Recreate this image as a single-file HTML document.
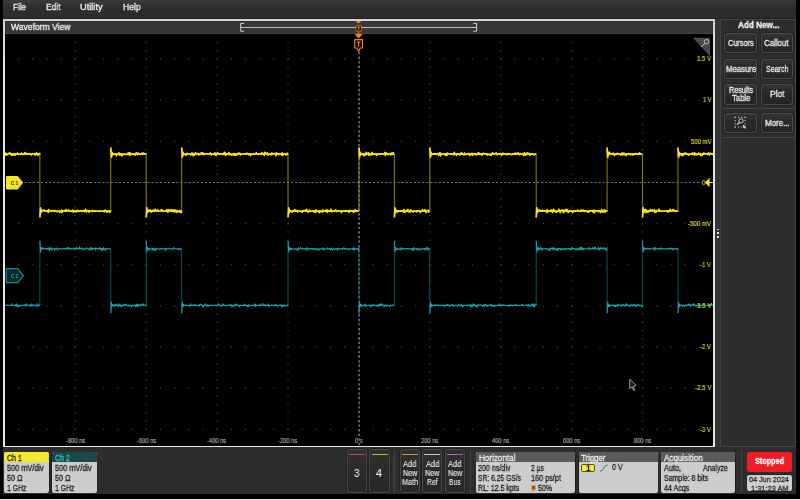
<!DOCTYPE html>
<html><head><meta charset="utf-8"><title>scope</title>
<style>
html,body{margin:0;padding:0;background:#000;}
body{width:800px;height:500px;position:relative;overflow:hidden;font-family:"Liberation Sans",sans-serif;}
.b{position:absolute;display:block;}
.t{will-change:transform;position:absolute;display:block;white-space:nowrap;transform-origin:0 50%;}
</style></head><body>
<div class="b" style="left:3.00px;top:0.00px;width:793.00px;height:494.00px;background:#2b2b2b;"></div>
<div class="b" style="left:3.00px;top:0.00px;width:793.00px;height:19.00px;background:linear-gradient(#3a3a3a,#2e2e2e 40%,#2b2b2b);"></div>
<span class="t" style="left:12.60px;top:1.99px;font-size:8.6px;line-height:10.32px;color:#f0f0f0;transform:scaleX(0.938);-webkit-text-stroke:0.28px #f0f0f0;">File</span>
<span class="t" style="left:45.60px;top:1.99px;font-size:8.6px;line-height:10.32px;color:#f0f0f0;transform:scaleX(0.972);-webkit-text-stroke:0.28px #f0f0f0;">Edit</span>
<span class="t" style="left:80.00px;top:1.99px;font-size:8.6px;line-height:10.32px;color:#f0f0f0;transform:scaleX(1.075);-webkit-text-stroke:0.28px #f0f0f0;">Utility</span>
<span class="t" style="left:122.50px;top:1.99px;font-size:8.6px;line-height:10.32px;color:#f0f0f0;transform:scaleX(0.989);-webkit-text-stroke:0.28px #f0f0f0;">Help</span>
<div class="b" style="left:3.00px;top:18.00px;width:793.00px;height:1.20px;background:#222;"></div>
<div class="b" style="left:3.00px;top:19.20px;width:711.80px;height:428.10px;background:linear-gradient(#d2d2d2,#e6e6e6 12%);"></div>
<div class="b" style="left:5.00px;top:20.80px;width:708.20px;height:13.60px;background:#363636;"></div>
<div class="b" style="left:5.00px;top:33.20px;width:708.20px;height:1.20px;background:#444;"></div>
<span class="t" style="left:10.60px;top:22.19px;font-size:8.6px;line-height:10.32px;color:#f2f2f2;transform:scaleX(0.994);-webkit-text-stroke:0.28px #f2f2f2;">Waveform View</span>
<div class="b" style="left:5.00px;top:34.40px;width:708.20px;height:411.50px;background:#000;"></div>
<div class="b" style="left:714.80px;top:19.20px;width:5.70px;height:428.10px;background:#353535;"></div>
<svg class="b" style="left:0;top:0" width="800" height="500" viewBox="0 0 800 500"><g fill="#464646"><rect x="18.03" y="58.45" width="1.15" height="1.15"/><rect x="32.21" y="58.45" width="1.15" height="1.15"/><rect x="46.39" y="58.45" width="1.15" height="1.15"/><rect x="60.57" y="58.45" width="1.15" height="1.15"/><rect x="74.75" y="58.45" width="1.15" height="1.15"/><rect x="88.93" y="58.45" width="1.15" height="1.15"/><rect x="103.11" y="58.45" width="1.15" height="1.15"/><rect x="117.29" y="58.45" width="1.15" height="1.15"/><rect x="131.47" y="58.45" width="1.15" height="1.15"/><rect x="145.65" y="58.45" width="1.15" height="1.15"/><rect x="159.83" y="58.45" width="1.15" height="1.15"/><rect x="174.01" y="58.45" width="1.15" height="1.15"/><rect x="188.19" y="58.45" width="1.15" height="1.15"/><rect x="202.37" y="58.45" width="1.15" height="1.15"/><rect x="216.55" y="58.45" width="1.15" height="1.15"/><rect x="230.73" y="58.45" width="1.15" height="1.15"/><rect x="244.91" y="58.45" width="1.15" height="1.15"/><rect x="259.09" y="58.45" width="1.15" height="1.15"/><rect x="273.27" y="58.45" width="1.15" height="1.15"/><rect x="287.45" y="58.45" width="1.15" height="1.15"/><rect x="301.63" y="58.45" width="1.15" height="1.15"/><rect x="315.81" y="58.45" width="1.15" height="1.15"/><rect x="329.99" y="58.45" width="1.15" height="1.15"/><rect x="344.17" y="58.45" width="1.15" height="1.15"/><rect x="358.35" y="58.45" width="1.15" height="1.15"/><rect x="372.53" y="58.45" width="1.15" height="1.15"/><rect x="386.71" y="58.45" width="1.15" height="1.15"/><rect x="400.89" y="58.45" width="1.15" height="1.15"/><rect x="415.07" y="58.45" width="1.15" height="1.15"/><rect x="429.25" y="58.45" width="1.15" height="1.15"/><rect x="443.43" y="58.45" width="1.15" height="1.15"/><rect x="457.61" y="58.45" width="1.15" height="1.15"/><rect x="471.79" y="58.45" width="1.15" height="1.15"/><rect x="485.97" y="58.45" width="1.15" height="1.15"/><rect x="500.15" y="58.45" width="1.15" height="1.15"/><rect x="514.33" y="58.45" width="1.15" height="1.15"/><rect x="528.51" y="58.45" width="1.15" height="1.15"/><rect x="542.69" y="58.45" width="1.15" height="1.15"/><rect x="556.87" y="58.45" width="1.15" height="1.15"/><rect x="571.05" y="58.45" width="1.15" height="1.15"/><rect x="585.23" y="58.45" width="1.15" height="1.15"/><rect x="599.41" y="58.45" width="1.15" height="1.15"/><rect x="613.59" y="58.45" width="1.15" height="1.15"/><rect x="627.77" y="58.45" width="1.15" height="1.15"/><rect x="641.95" y="58.45" width="1.15" height="1.15"/><rect x="656.13" y="58.45" width="1.15" height="1.15"/><rect x="670.31" y="58.45" width="1.15" height="1.15"/><rect x="684.49" y="58.45" width="1.15" height="1.15"/><rect x="698.67" y="58.45" width="1.15" height="1.15"/><rect x="18.03" y="99.60" width="1.15" height="1.15"/><rect x="32.21" y="99.60" width="1.15" height="1.15"/><rect x="46.39" y="99.60" width="1.15" height="1.15"/><rect x="60.57" y="99.60" width="1.15" height="1.15"/><rect x="74.75" y="99.60" width="1.15" height="1.15"/><rect x="88.93" y="99.60" width="1.15" height="1.15"/><rect x="103.11" y="99.60" width="1.15" height="1.15"/><rect x="117.29" y="99.60" width="1.15" height="1.15"/><rect x="131.47" y="99.60" width="1.15" height="1.15"/><rect x="145.65" y="99.60" width="1.15" height="1.15"/><rect x="159.83" y="99.60" width="1.15" height="1.15"/><rect x="174.01" y="99.60" width="1.15" height="1.15"/><rect x="188.19" y="99.60" width="1.15" height="1.15"/><rect x="202.37" y="99.60" width="1.15" height="1.15"/><rect x="216.55" y="99.60" width="1.15" height="1.15"/><rect x="230.73" y="99.60" width="1.15" height="1.15"/><rect x="244.91" y="99.60" width="1.15" height="1.15"/><rect x="259.09" y="99.60" width="1.15" height="1.15"/><rect x="273.27" y="99.60" width="1.15" height="1.15"/><rect x="287.45" y="99.60" width="1.15" height="1.15"/><rect x="301.63" y="99.60" width="1.15" height="1.15"/><rect x="315.81" y="99.60" width="1.15" height="1.15"/><rect x="329.99" y="99.60" width="1.15" height="1.15"/><rect x="344.17" y="99.60" width="1.15" height="1.15"/><rect x="358.35" y="99.60" width="1.15" height="1.15"/><rect x="372.53" y="99.60" width="1.15" height="1.15"/><rect x="386.71" y="99.60" width="1.15" height="1.15"/><rect x="400.89" y="99.60" width="1.15" height="1.15"/><rect x="415.07" y="99.60" width="1.15" height="1.15"/><rect x="429.25" y="99.60" width="1.15" height="1.15"/><rect x="443.43" y="99.60" width="1.15" height="1.15"/><rect x="457.61" y="99.60" width="1.15" height="1.15"/><rect x="471.79" y="99.60" width="1.15" height="1.15"/><rect x="485.97" y="99.60" width="1.15" height="1.15"/><rect x="500.15" y="99.60" width="1.15" height="1.15"/><rect x="514.33" y="99.60" width="1.15" height="1.15"/><rect x="528.51" y="99.60" width="1.15" height="1.15"/><rect x="542.69" y="99.60" width="1.15" height="1.15"/><rect x="556.87" y="99.60" width="1.15" height="1.15"/><rect x="571.05" y="99.60" width="1.15" height="1.15"/><rect x="585.23" y="99.60" width="1.15" height="1.15"/><rect x="599.41" y="99.60" width="1.15" height="1.15"/><rect x="613.59" y="99.60" width="1.15" height="1.15"/><rect x="627.77" y="99.60" width="1.15" height="1.15"/><rect x="641.95" y="99.60" width="1.15" height="1.15"/><rect x="656.13" y="99.60" width="1.15" height="1.15"/><rect x="670.31" y="99.60" width="1.15" height="1.15"/><rect x="684.49" y="99.60" width="1.15" height="1.15"/><rect x="698.67" y="99.60" width="1.15" height="1.15"/><rect x="18.03" y="140.75" width="1.15" height="1.15"/><rect x="32.21" y="140.75" width="1.15" height="1.15"/><rect x="46.39" y="140.75" width="1.15" height="1.15"/><rect x="60.57" y="140.75" width="1.15" height="1.15"/><rect x="74.75" y="140.75" width="1.15" height="1.15"/><rect x="88.93" y="140.75" width="1.15" height="1.15"/><rect x="103.11" y="140.75" width="1.15" height="1.15"/><rect x="117.29" y="140.75" width="1.15" height="1.15"/><rect x="131.47" y="140.75" width="1.15" height="1.15"/><rect x="145.65" y="140.75" width="1.15" height="1.15"/><rect x="159.83" y="140.75" width="1.15" height="1.15"/><rect x="174.01" y="140.75" width="1.15" height="1.15"/><rect x="188.19" y="140.75" width="1.15" height="1.15"/><rect x="202.37" y="140.75" width="1.15" height="1.15"/><rect x="216.55" y="140.75" width="1.15" height="1.15"/><rect x="230.73" y="140.75" width="1.15" height="1.15"/><rect x="244.91" y="140.75" width="1.15" height="1.15"/><rect x="259.09" y="140.75" width="1.15" height="1.15"/><rect x="273.27" y="140.75" width="1.15" height="1.15"/><rect x="287.45" y="140.75" width="1.15" height="1.15"/><rect x="301.63" y="140.75" width="1.15" height="1.15"/><rect x="315.81" y="140.75" width="1.15" height="1.15"/><rect x="329.99" y="140.75" width="1.15" height="1.15"/><rect x="344.17" y="140.75" width="1.15" height="1.15"/><rect x="358.35" y="140.75" width="1.15" height="1.15"/><rect x="372.53" y="140.75" width="1.15" height="1.15"/><rect x="386.71" y="140.75" width="1.15" height="1.15"/><rect x="400.89" y="140.75" width="1.15" height="1.15"/><rect x="415.07" y="140.75" width="1.15" height="1.15"/><rect x="429.25" y="140.75" width="1.15" height="1.15"/><rect x="443.43" y="140.75" width="1.15" height="1.15"/><rect x="457.61" y="140.75" width="1.15" height="1.15"/><rect x="471.79" y="140.75" width="1.15" height="1.15"/><rect x="485.97" y="140.75" width="1.15" height="1.15"/><rect x="500.15" y="140.75" width="1.15" height="1.15"/><rect x="514.33" y="140.75" width="1.15" height="1.15"/><rect x="528.51" y="140.75" width="1.15" height="1.15"/><rect x="542.69" y="140.75" width="1.15" height="1.15"/><rect x="556.87" y="140.75" width="1.15" height="1.15"/><rect x="571.05" y="140.75" width="1.15" height="1.15"/><rect x="585.23" y="140.75" width="1.15" height="1.15"/><rect x="599.41" y="140.75" width="1.15" height="1.15"/><rect x="613.59" y="140.75" width="1.15" height="1.15"/><rect x="627.77" y="140.75" width="1.15" height="1.15"/><rect x="641.95" y="140.75" width="1.15" height="1.15"/><rect x="656.13" y="140.75" width="1.15" height="1.15"/><rect x="670.31" y="140.75" width="1.15" height="1.15"/><rect x="684.49" y="140.75" width="1.15" height="1.15"/><rect x="698.67" y="140.75" width="1.15" height="1.15"/><rect x="18.03" y="181.90" width="1.15" height="1.15"/><rect x="32.21" y="181.90" width="1.15" height="1.15"/><rect x="46.39" y="181.90" width="1.15" height="1.15"/><rect x="60.57" y="181.90" width="1.15" height="1.15"/><rect x="74.75" y="181.90" width="1.15" height="1.15"/><rect x="88.93" y="181.90" width="1.15" height="1.15"/><rect x="103.11" y="181.90" width="1.15" height="1.15"/><rect x="117.29" y="181.90" width="1.15" height="1.15"/><rect x="131.47" y="181.90" width="1.15" height="1.15"/><rect x="145.65" y="181.90" width="1.15" height="1.15"/><rect x="159.83" y="181.90" width="1.15" height="1.15"/><rect x="174.01" y="181.90" width="1.15" height="1.15"/><rect x="188.19" y="181.90" width="1.15" height="1.15"/><rect x="202.37" y="181.90" width="1.15" height="1.15"/><rect x="216.55" y="181.90" width="1.15" height="1.15"/><rect x="230.73" y="181.90" width="1.15" height="1.15"/><rect x="244.91" y="181.90" width="1.15" height="1.15"/><rect x="259.09" y="181.90" width="1.15" height="1.15"/><rect x="273.27" y="181.90" width="1.15" height="1.15"/><rect x="287.45" y="181.90" width="1.15" height="1.15"/><rect x="301.63" y="181.90" width="1.15" height="1.15"/><rect x="315.81" y="181.90" width="1.15" height="1.15"/><rect x="329.99" y="181.90" width="1.15" height="1.15"/><rect x="344.17" y="181.90" width="1.15" height="1.15"/><rect x="358.35" y="181.90" width="1.15" height="1.15"/><rect x="372.53" y="181.90" width="1.15" height="1.15"/><rect x="386.71" y="181.90" width="1.15" height="1.15"/><rect x="400.89" y="181.90" width="1.15" height="1.15"/><rect x="415.07" y="181.90" width="1.15" height="1.15"/><rect x="429.25" y="181.90" width="1.15" height="1.15"/><rect x="443.43" y="181.90" width="1.15" height="1.15"/><rect x="457.61" y="181.90" width="1.15" height="1.15"/><rect x="471.79" y="181.90" width="1.15" height="1.15"/><rect x="485.97" y="181.90" width="1.15" height="1.15"/><rect x="500.15" y="181.90" width="1.15" height="1.15"/><rect x="514.33" y="181.90" width="1.15" height="1.15"/><rect x="528.51" y="181.90" width="1.15" height="1.15"/><rect x="542.69" y="181.90" width="1.15" height="1.15"/><rect x="556.87" y="181.90" width="1.15" height="1.15"/><rect x="571.05" y="181.90" width="1.15" height="1.15"/><rect x="585.23" y="181.90" width="1.15" height="1.15"/><rect x="599.41" y="181.90" width="1.15" height="1.15"/><rect x="613.59" y="181.90" width="1.15" height="1.15"/><rect x="627.77" y="181.90" width="1.15" height="1.15"/><rect x="641.95" y="181.90" width="1.15" height="1.15"/><rect x="656.13" y="181.90" width="1.15" height="1.15"/><rect x="670.31" y="181.90" width="1.15" height="1.15"/><rect x="684.49" y="181.90" width="1.15" height="1.15"/><rect x="698.67" y="181.90" width="1.15" height="1.15"/><rect x="18.03" y="223.05" width="1.15" height="1.15"/><rect x="32.21" y="223.05" width="1.15" height="1.15"/><rect x="46.39" y="223.05" width="1.15" height="1.15"/><rect x="60.57" y="223.05" width="1.15" height="1.15"/><rect x="74.75" y="223.05" width="1.15" height="1.15"/><rect x="88.93" y="223.05" width="1.15" height="1.15"/><rect x="103.11" y="223.05" width="1.15" height="1.15"/><rect x="117.29" y="223.05" width="1.15" height="1.15"/><rect x="131.47" y="223.05" width="1.15" height="1.15"/><rect x="145.65" y="223.05" width="1.15" height="1.15"/><rect x="159.83" y="223.05" width="1.15" height="1.15"/><rect x="174.01" y="223.05" width="1.15" height="1.15"/><rect x="188.19" y="223.05" width="1.15" height="1.15"/><rect x="202.37" y="223.05" width="1.15" height="1.15"/><rect x="216.55" y="223.05" width="1.15" height="1.15"/><rect x="230.73" y="223.05" width="1.15" height="1.15"/><rect x="244.91" y="223.05" width="1.15" height="1.15"/><rect x="259.09" y="223.05" width="1.15" height="1.15"/><rect x="273.27" y="223.05" width="1.15" height="1.15"/><rect x="287.45" y="223.05" width="1.15" height="1.15"/><rect x="301.63" y="223.05" width="1.15" height="1.15"/><rect x="315.81" y="223.05" width="1.15" height="1.15"/><rect x="329.99" y="223.05" width="1.15" height="1.15"/><rect x="344.17" y="223.05" width="1.15" height="1.15"/><rect x="358.35" y="223.05" width="1.15" height="1.15"/><rect x="372.53" y="223.05" width="1.15" height="1.15"/><rect x="386.71" y="223.05" width="1.15" height="1.15"/><rect x="400.89" y="223.05" width="1.15" height="1.15"/><rect x="415.07" y="223.05" width="1.15" height="1.15"/><rect x="429.25" y="223.05" width="1.15" height="1.15"/><rect x="443.43" y="223.05" width="1.15" height="1.15"/><rect x="457.61" y="223.05" width="1.15" height="1.15"/><rect x="471.79" y="223.05" width="1.15" height="1.15"/><rect x="485.97" y="223.05" width="1.15" height="1.15"/><rect x="500.15" y="223.05" width="1.15" height="1.15"/><rect x="514.33" y="223.05" width="1.15" height="1.15"/><rect x="528.51" y="223.05" width="1.15" height="1.15"/><rect x="542.69" y="223.05" width="1.15" height="1.15"/><rect x="556.87" y="223.05" width="1.15" height="1.15"/><rect x="571.05" y="223.05" width="1.15" height="1.15"/><rect x="585.23" y="223.05" width="1.15" height="1.15"/><rect x="599.41" y="223.05" width="1.15" height="1.15"/><rect x="613.59" y="223.05" width="1.15" height="1.15"/><rect x="627.77" y="223.05" width="1.15" height="1.15"/><rect x="641.95" y="223.05" width="1.15" height="1.15"/><rect x="656.13" y="223.05" width="1.15" height="1.15"/><rect x="670.31" y="223.05" width="1.15" height="1.15"/><rect x="684.49" y="223.05" width="1.15" height="1.15"/><rect x="698.67" y="223.05" width="1.15" height="1.15"/><rect x="18.03" y="264.20" width="1.15" height="1.15"/><rect x="32.21" y="264.20" width="1.15" height="1.15"/><rect x="46.39" y="264.20" width="1.15" height="1.15"/><rect x="60.57" y="264.20" width="1.15" height="1.15"/><rect x="74.75" y="264.20" width="1.15" height="1.15"/><rect x="88.93" y="264.20" width="1.15" height="1.15"/><rect x="103.11" y="264.20" width="1.15" height="1.15"/><rect x="117.29" y="264.20" width="1.15" height="1.15"/><rect x="131.47" y="264.20" width="1.15" height="1.15"/><rect x="145.65" y="264.20" width="1.15" height="1.15"/><rect x="159.83" y="264.20" width="1.15" height="1.15"/><rect x="174.01" y="264.20" width="1.15" height="1.15"/><rect x="188.19" y="264.20" width="1.15" height="1.15"/><rect x="202.37" y="264.20" width="1.15" height="1.15"/><rect x="216.55" y="264.20" width="1.15" height="1.15"/><rect x="230.73" y="264.20" width="1.15" height="1.15"/><rect x="244.91" y="264.20" width="1.15" height="1.15"/><rect x="259.09" y="264.20" width="1.15" height="1.15"/><rect x="273.27" y="264.20" width="1.15" height="1.15"/><rect x="287.45" y="264.20" width="1.15" height="1.15"/><rect x="301.63" y="264.20" width="1.15" height="1.15"/><rect x="315.81" y="264.20" width="1.15" height="1.15"/><rect x="329.99" y="264.20" width="1.15" height="1.15"/><rect x="344.17" y="264.20" width="1.15" height="1.15"/><rect x="358.35" y="264.20" width="1.15" height="1.15"/><rect x="372.53" y="264.20" width="1.15" height="1.15"/><rect x="386.71" y="264.20" width="1.15" height="1.15"/><rect x="400.89" y="264.20" width="1.15" height="1.15"/><rect x="415.07" y="264.20" width="1.15" height="1.15"/><rect x="429.25" y="264.20" width="1.15" height="1.15"/><rect x="443.43" y="264.20" width="1.15" height="1.15"/><rect x="457.61" y="264.20" width="1.15" height="1.15"/><rect x="471.79" y="264.20" width="1.15" height="1.15"/><rect x="485.97" y="264.20" width="1.15" height="1.15"/><rect x="500.15" y="264.20" width="1.15" height="1.15"/><rect x="514.33" y="264.20" width="1.15" height="1.15"/><rect x="528.51" y="264.20" width="1.15" height="1.15"/><rect x="542.69" y="264.20" width="1.15" height="1.15"/><rect x="556.87" y="264.20" width="1.15" height="1.15"/><rect x="571.05" y="264.20" width="1.15" height="1.15"/><rect x="585.23" y="264.20" width="1.15" height="1.15"/><rect x="599.41" y="264.20" width="1.15" height="1.15"/><rect x="613.59" y="264.20" width="1.15" height="1.15"/><rect x="627.77" y="264.20" width="1.15" height="1.15"/><rect x="641.95" y="264.20" width="1.15" height="1.15"/><rect x="656.13" y="264.20" width="1.15" height="1.15"/><rect x="670.31" y="264.20" width="1.15" height="1.15"/><rect x="684.49" y="264.20" width="1.15" height="1.15"/><rect x="698.67" y="264.20" width="1.15" height="1.15"/><rect x="18.03" y="305.35" width="1.15" height="1.15"/><rect x="32.21" y="305.35" width="1.15" height="1.15"/><rect x="46.39" y="305.35" width="1.15" height="1.15"/><rect x="60.57" y="305.35" width="1.15" height="1.15"/><rect x="74.75" y="305.35" width="1.15" height="1.15"/><rect x="88.93" y="305.35" width="1.15" height="1.15"/><rect x="103.11" y="305.35" width="1.15" height="1.15"/><rect x="117.29" y="305.35" width="1.15" height="1.15"/><rect x="131.47" y="305.35" width="1.15" height="1.15"/><rect x="145.65" y="305.35" width="1.15" height="1.15"/><rect x="159.83" y="305.35" width="1.15" height="1.15"/><rect x="174.01" y="305.35" width="1.15" height="1.15"/><rect x="188.19" y="305.35" width="1.15" height="1.15"/><rect x="202.37" y="305.35" width="1.15" height="1.15"/><rect x="216.55" y="305.35" width="1.15" height="1.15"/><rect x="230.73" y="305.35" width="1.15" height="1.15"/><rect x="244.91" y="305.35" width="1.15" height="1.15"/><rect x="259.09" y="305.35" width="1.15" height="1.15"/><rect x="273.27" y="305.35" width="1.15" height="1.15"/><rect x="287.45" y="305.35" width="1.15" height="1.15"/><rect x="301.63" y="305.35" width="1.15" height="1.15"/><rect x="315.81" y="305.35" width="1.15" height="1.15"/><rect x="329.99" y="305.35" width="1.15" height="1.15"/><rect x="344.17" y="305.35" width="1.15" height="1.15"/><rect x="358.35" y="305.35" width="1.15" height="1.15"/><rect x="372.53" y="305.35" width="1.15" height="1.15"/><rect x="386.71" y="305.35" width="1.15" height="1.15"/><rect x="400.89" y="305.35" width="1.15" height="1.15"/><rect x="415.07" y="305.35" width="1.15" height="1.15"/><rect x="429.25" y="305.35" width="1.15" height="1.15"/><rect x="443.43" y="305.35" width="1.15" height="1.15"/><rect x="457.61" y="305.35" width="1.15" height="1.15"/><rect x="471.79" y="305.35" width="1.15" height="1.15"/><rect x="485.97" y="305.35" width="1.15" height="1.15"/><rect x="500.15" y="305.35" width="1.15" height="1.15"/><rect x="514.33" y="305.35" width="1.15" height="1.15"/><rect x="528.51" y="305.35" width="1.15" height="1.15"/><rect x="542.69" y="305.35" width="1.15" height="1.15"/><rect x="556.87" y="305.35" width="1.15" height="1.15"/><rect x="571.05" y="305.35" width="1.15" height="1.15"/><rect x="585.23" y="305.35" width="1.15" height="1.15"/><rect x="599.41" y="305.35" width="1.15" height="1.15"/><rect x="613.59" y="305.35" width="1.15" height="1.15"/><rect x="627.77" y="305.35" width="1.15" height="1.15"/><rect x="641.95" y="305.35" width="1.15" height="1.15"/><rect x="656.13" y="305.35" width="1.15" height="1.15"/><rect x="670.31" y="305.35" width="1.15" height="1.15"/><rect x="684.49" y="305.35" width="1.15" height="1.15"/><rect x="698.67" y="305.35" width="1.15" height="1.15"/><rect x="18.03" y="346.50" width="1.15" height="1.15"/><rect x="32.21" y="346.50" width="1.15" height="1.15"/><rect x="46.39" y="346.50" width="1.15" height="1.15"/><rect x="60.57" y="346.50" width="1.15" height="1.15"/><rect x="74.75" y="346.50" width="1.15" height="1.15"/><rect x="88.93" y="346.50" width="1.15" height="1.15"/><rect x="103.11" y="346.50" width="1.15" height="1.15"/><rect x="117.29" y="346.50" width="1.15" height="1.15"/><rect x="131.47" y="346.50" width="1.15" height="1.15"/><rect x="145.65" y="346.50" width="1.15" height="1.15"/><rect x="159.83" y="346.50" width="1.15" height="1.15"/><rect x="174.01" y="346.50" width="1.15" height="1.15"/><rect x="188.19" y="346.50" width="1.15" height="1.15"/><rect x="202.37" y="346.50" width="1.15" height="1.15"/><rect x="216.55" y="346.50" width="1.15" height="1.15"/><rect x="230.73" y="346.50" width="1.15" height="1.15"/><rect x="244.91" y="346.50" width="1.15" height="1.15"/><rect x="259.09" y="346.50" width="1.15" height="1.15"/><rect x="273.27" y="346.50" width="1.15" height="1.15"/><rect x="287.45" y="346.50" width="1.15" height="1.15"/><rect x="301.63" y="346.50" width="1.15" height="1.15"/><rect x="315.81" y="346.50" width="1.15" height="1.15"/><rect x="329.99" y="346.50" width="1.15" height="1.15"/><rect x="344.17" y="346.50" width="1.15" height="1.15"/><rect x="358.35" y="346.50" width="1.15" height="1.15"/><rect x="372.53" y="346.50" width="1.15" height="1.15"/><rect x="386.71" y="346.50" width="1.15" height="1.15"/><rect x="400.89" y="346.50" width="1.15" height="1.15"/><rect x="415.07" y="346.50" width="1.15" height="1.15"/><rect x="429.25" y="346.50" width="1.15" height="1.15"/><rect x="443.43" y="346.50" width="1.15" height="1.15"/><rect x="457.61" y="346.50" width="1.15" height="1.15"/><rect x="471.79" y="346.50" width="1.15" height="1.15"/><rect x="485.97" y="346.50" width="1.15" height="1.15"/><rect x="500.15" y="346.50" width="1.15" height="1.15"/><rect x="514.33" y="346.50" width="1.15" height="1.15"/><rect x="528.51" y="346.50" width="1.15" height="1.15"/><rect x="542.69" y="346.50" width="1.15" height="1.15"/><rect x="556.87" y="346.50" width="1.15" height="1.15"/><rect x="571.05" y="346.50" width="1.15" height="1.15"/><rect x="585.23" y="346.50" width="1.15" height="1.15"/><rect x="599.41" y="346.50" width="1.15" height="1.15"/><rect x="613.59" y="346.50" width="1.15" height="1.15"/><rect x="627.77" y="346.50" width="1.15" height="1.15"/><rect x="641.95" y="346.50" width="1.15" height="1.15"/><rect x="656.13" y="346.50" width="1.15" height="1.15"/><rect x="670.31" y="346.50" width="1.15" height="1.15"/><rect x="684.49" y="346.50" width="1.15" height="1.15"/><rect x="698.67" y="346.50" width="1.15" height="1.15"/><rect x="18.03" y="387.65" width="1.15" height="1.15"/><rect x="32.21" y="387.65" width="1.15" height="1.15"/><rect x="46.39" y="387.65" width="1.15" height="1.15"/><rect x="60.57" y="387.65" width="1.15" height="1.15"/><rect x="74.75" y="387.65" width="1.15" height="1.15"/><rect x="88.93" y="387.65" width="1.15" height="1.15"/><rect x="103.11" y="387.65" width="1.15" height="1.15"/><rect x="117.29" y="387.65" width="1.15" height="1.15"/><rect x="131.47" y="387.65" width="1.15" height="1.15"/><rect x="145.65" y="387.65" width="1.15" height="1.15"/><rect x="159.83" y="387.65" width="1.15" height="1.15"/><rect x="174.01" y="387.65" width="1.15" height="1.15"/><rect x="188.19" y="387.65" width="1.15" height="1.15"/><rect x="202.37" y="387.65" width="1.15" height="1.15"/><rect x="216.55" y="387.65" width="1.15" height="1.15"/><rect x="230.73" y="387.65" width="1.15" height="1.15"/><rect x="244.91" y="387.65" width="1.15" height="1.15"/><rect x="259.09" y="387.65" width="1.15" height="1.15"/><rect x="273.27" y="387.65" width="1.15" height="1.15"/><rect x="287.45" y="387.65" width="1.15" height="1.15"/><rect x="301.63" y="387.65" width="1.15" height="1.15"/><rect x="315.81" y="387.65" width="1.15" height="1.15"/><rect x="329.99" y="387.65" width="1.15" height="1.15"/><rect x="344.17" y="387.65" width="1.15" height="1.15"/><rect x="358.35" y="387.65" width="1.15" height="1.15"/><rect x="372.53" y="387.65" width="1.15" height="1.15"/><rect x="386.71" y="387.65" width="1.15" height="1.15"/><rect x="400.89" y="387.65" width="1.15" height="1.15"/><rect x="415.07" y="387.65" width="1.15" height="1.15"/><rect x="429.25" y="387.65" width="1.15" height="1.15"/><rect x="443.43" y="387.65" width="1.15" height="1.15"/><rect x="457.61" y="387.65" width="1.15" height="1.15"/><rect x="471.79" y="387.65" width="1.15" height="1.15"/><rect x="485.97" y="387.65" width="1.15" height="1.15"/><rect x="500.15" y="387.65" width="1.15" height="1.15"/><rect x="514.33" y="387.65" width="1.15" height="1.15"/><rect x="528.51" y="387.65" width="1.15" height="1.15"/><rect x="542.69" y="387.65" width="1.15" height="1.15"/><rect x="556.87" y="387.65" width="1.15" height="1.15"/><rect x="571.05" y="387.65" width="1.15" height="1.15"/><rect x="585.23" y="387.65" width="1.15" height="1.15"/><rect x="599.41" y="387.65" width="1.15" height="1.15"/><rect x="613.59" y="387.65" width="1.15" height="1.15"/><rect x="627.77" y="387.65" width="1.15" height="1.15"/><rect x="641.95" y="387.65" width="1.15" height="1.15"/><rect x="656.13" y="387.65" width="1.15" height="1.15"/><rect x="670.31" y="387.65" width="1.15" height="1.15"/><rect x="684.49" y="387.65" width="1.15" height="1.15"/><rect x="698.67" y="387.65" width="1.15" height="1.15"/><rect x="18.03" y="428.80" width="1.15" height="1.15"/><rect x="32.21" y="428.80" width="1.15" height="1.15"/><rect x="46.39" y="428.80" width="1.15" height="1.15"/><rect x="60.57" y="428.80" width="1.15" height="1.15"/><rect x="74.75" y="428.80" width="1.15" height="1.15"/><rect x="88.93" y="428.80" width="1.15" height="1.15"/><rect x="103.11" y="428.80" width="1.15" height="1.15"/><rect x="117.29" y="428.80" width="1.15" height="1.15"/><rect x="131.47" y="428.80" width="1.15" height="1.15"/><rect x="145.65" y="428.80" width="1.15" height="1.15"/><rect x="159.83" y="428.80" width="1.15" height="1.15"/><rect x="174.01" y="428.80" width="1.15" height="1.15"/><rect x="188.19" y="428.80" width="1.15" height="1.15"/><rect x="202.37" y="428.80" width="1.15" height="1.15"/><rect x="216.55" y="428.80" width="1.15" height="1.15"/><rect x="230.73" y="428.80" width="1.15" height="1.15"/><rect x="244.91" y="428.80" width="1.15" height="1.15"/><rect x="259.09" y="428.80" width="1.15" height="1.15"/><rect x="273.27" y="428.80" width="1.15" height="1.15"/><rect x="287.45" y="428.80" width="1.15" height="1.15"/><rect x="301.63" y="428.80" width="1.15" height="1.15"/><rect x="315.81" y="428.80" width="1.15" height="1.15"/><rect x="329.99" y="428.80" width="1.15" height="1.15"/><rect x="344.17" y="428.80" width="1.15" height="1.15"/><rect x="358.35" y="428.80" width="1.15" height="1.15"/><rect x="372.53" y="428.80" width="1.15" height="1.15"/><rect x="386.71" y="428.80" width="1.15" height="1.15"/><rect x="400.89" y="428.80" width="1.15" height="1.15"/><rect x="415.07" y="428.80" width="1.15" height="1.15"/><rect x="429.25" y="428.80" width="1.15" height="1.15"/><rect x="443.43" y="428.80" width="1.15" height="1.15"/><rect x="457.61" y="428.80" width="1.15" height="1.15"/><rect x="471.79" y="428.80" width="1.15" height="1.15"/><rect x="485.97" y="428.80" width="1.15" height="1.15"/><rect x="500.15" y="428.80" width="1.15" height="1.15"/><rect x="514.33" y="428.80" width="1.15" height="1.15"/><rect x="528.51" y="428.80" width="1.15" height="1.15"/><rect x="542.69" y="428.80" width="1.15" height="1.15"/><rect x="556.87" y="428.80" width="1.15" height="1.15"/><rect x="571.05" y="428.80" width="1.15" height="1.15"/><rect x="585.23" y="428.80" width="1.15" height="1.15"/><rect x="599.41" y="428.80" width="1.15" height="1.15"/><rect x="613.59" y="428.80" width="1.15" height="1.15"/><rect x="627.77" y="428.80" width="1.15" height="1.15"/><rect x="641.95" y="428.80" width="1.15" height="1.15"/><rect x="656.13" y="428.80" width="1.15" height="1.15"/><rect x="670.31" y="428.80" width="1.15" height="1.15"/><rect x="684.49" y="428.80" width="1.15" height="1.15"/><rect x="698.67" y="428.80" width="1.15" height="1.15"/><rect x="74.75" y="41.99" width="1.15" height="1.15"/><rect x="74.75" y="50.22" width="1.15" height="1.15"/><rect x="74.75" y="58.45" width="1.15" height="1.15"/><rect x="74.75" y="66.68" width="1.15" height="1.15"/><rect x="74.75" y="74.91" width="1.15" height="1.15"/><rect x="74.75" y="83.14" width="1.15" height="1.15"/><rect x="74.75" y="91.37" width="1.15" height="1.15"/><rect x="74.75" y="99.60" width="1.15" height="1.15"/><rect x="74.75" y="107.83" width="1.15" height="1.15"/><rect x="74.75" y="116.06" width="1.15" height="1.15"/><rect x="74.75" y="124.29" width="1.15" height="1.15"/><rect x="74.75" y="132.52" width="1.15" height="1.15"/><rect x="74.75" y="140.75" width="1.15" height="1.15"/><rect x="74.75" y="148.98" width="1.15" height="1.15"/><rect x="74.75" y="157.21" width="1.15" height="1.15"/><rect x="74.75" y="165.44" width="1.15" height="1.15"/><rect x="74.75" y="173.67" width="1.15" height="1.15"/><rect x="74.75" y="181.90" width="1.15" height="1.15"/><rect x="74.75" y="190.13" width="1.15" height="1.15"/><rect x="74.75" y="198.36" width="1.15" height="1.15"/><rect x="74.75" y="206.59" width="1.15" height="1.15"/><rect x="74.75" y="214.82" width="1.15" height="1.15"/><rect x="74.75" y="223.05" width="1.15" height="1.15"/><rect x="74.75" y="231.28" width="1.15" height="1.15"/><rect x="74.75" y="239.51" width="1.15" height="1.15"/><rect x="74.75" y="247.74" width="1.15" height="1.15"/><rect x="74.75" y="255.97" width="1.15" height="1.15"/><rect x="74.75" y="264.20" width="1.15" height="1.15"/><rect x="74.75" y="272.43" width="1.15" height="1.15"/><rect x="74.75" y="280.66" width="1.15" height="1.15"/><rect x="74.75" y="288.89" width="1.15" height="1.15"/><rect x="74.75" y="297.12" width="1.15" height="1.15"/><rect x="74.75" y="305.35" width="1.15" height="1.15"/><rect x="74.75" y="313.58" width="1.15" height="1.15"/><rect x="74.75" y="321.81" width="1.15" height="1.15"/><rect x="74.75" y="330.04" width="1.15" height="1.15"/><rect x="74.75" y="338.27" width="1.15" height="1.15"/><rect x="74.75" y="346.50" width="1.15" height="1.15"/><rect x="74.75" y="354.73" width="1.15" height="1.15"/><rect x="74.75" y="362.96" width="1.15" height="1.15"/><rect x="74.75" y="371.19" width="1.15" height="1.15"/><rect x="74.75" y="379.42" width="1.15" height="1.15"/><rect x="74.75" y="387.65" width="1.15" height="1.15"/><rect x="74.75" y="395.88" width="1.15" height="1.15"/><rect x="74.75" y="404.11" width="1.15" height="1.15"/><rect x="74.75" y="412.34" width="1.15" height="1.15"/><rect x="74.75" y="420.57" width="1.15" height="1.15"/><rect x="74.75" y="428.80" width="1.15" height="1.15"/><rect x="145.65" y="41.99" width="1.15" height="1.15"/><rect x="145.65" y="50.22" width="1.15" height="1.15"/><rect x="145.65" y="58.45" width="1.15" height="1.15"/><rect x="145.65" y="66.68" width="1.15" height="1.15"/><rect x="145.65" y="74.91" width="1.15" height="1.15"/><rect x="145.65" y="83.14" width="1.15" height="1.15"/><rect x="145.65" y="91.37" width="1.15" height="1.15"/><rect x="145.65" y="99.60" width="1.15" height="1.15"/><rect x="145.65" y="107.83" width="1.15" height="1.15"/><rect x="145.65" y="116.06" width="1.15" height="1.15"/><rect x="145.65" y="124.29" width="1.15" height="1.15"/><rect x="145.65" y="132.52" width="1.15" height="1.15"/><rect x="145.65" y="140.75" width="1.15" height="1.15"/><rect x="145.65" y="148.98" width="1.15" height="1.15"/><rect x="145.65" y="157.21" width="1.15" height="1.15"/><rect x="145.65" y="165.44" width="1.15" height="1.15"/><rect x="145.65" y="173.67" width="1.15" height="1.15"/><rect x="145.65" y="181.90" width="1.15" height="1.15"/><rect x="145.65" y="190.13" width="1.15" height="1.15"/><rect x="145.65" y="198.36" width="1.15" height="1.15"/><rect x="145.65" y="206.59" width="1.15" height="1.15"/><rect x="145.65" y="214.82" width="1.15" height="1.15"/><rect x="145.65" y="223.05" width="1.15" height="1.15"/><rect x="145.65" y="231.28" width="1.15" height="1.15"/><rect x="145.65" y="239.51" width="1.15" height="1.15"/><rect x="145.65" y="247.74" width="1.15" height="1.15"/><rect x="145.65" y="255.97" width="1.15" height="1.15"/><rect x="145.65" y="264.20" width="1.15" height="1.15"/><rect x="145.65" y="272.43" width="1.15" height="1.15"/><rect x="145.65" y="280.66" width="1.15" height="1.15"/><rect x="145.65" y="288.89" width="1.15" height="1.15"/><rect x="145.65" y="297.12" width="1.15" height="1.15"/><rect x="145.65" y="305.35" width="1.15" height="1.15"/><rect x="145.65" y="313.58" width="1.15" height="1.15"/><rect x="145.65" y="321.81" width="1.15" height="1.15"/><rect x="145.65" y="330.04" width="1.15" height="1.15"/><rect x="145.65" y="338.27" width="1.15" height="1.15"/><rect x="145.65" y="346.50" width="1.15" height="1.15"/><rect x="145.65" y="354.73" width="1.15" height="1.15"/><rect x="145.65" y="362.96" width="1.15" height="1.15"/><rect x="145.65" y="371.19" width="1.15" height="1.15"/><rect x="145.65" y="379.42" width="1.15" height="1.15"/><rect x="145.65" y="387.65" width="1.15" height="1.15"/><rect x="145.65" y="395.88" width="1.15" height="1.15"/><rect x="145.65" y="404.11" width="1.15" height="1.15"/><rect x="145.65" y="412.34" width="1.15" height="1.15"/><rect x="145.65" y="420.57" width="1.15" height="1.15"/><rect x="145.65" y="428.80" width="1.15" height="1.15"/><rect x="216.55" y="41.99" width="1.15" height="1.15"/><rect x="216.55" y="50.22" width="1.15" height="1.15"/><rect x="216.55" y="58.45" width="1.15" height="1.15"/><rect x="216.55" y="66.68" width="1.15" height="1.15"/><rect x="216.55" y="74.91" width="1.15" height="1.15"/><rect x="216.55" y="83.14" width="1.15" height="1.15"/><rect x="216.55" y="91.37" width="1.15" height="1.15"/><rect x="216.55" y="99.60" width="1.15" height="1.15"/><rect x="216.55" y="107.83" width="1.15" height="1.15"/><rect x="216.55" y="116.06" width="1.15" height="1.15"/><rect x="216.55" y="124.29" width="1.15" height="1.15"/><rect x="216.55" y="132.52" width="1.15" height="1.15"/><rect x="216.55" y="140.75" width="1.15" height="1.15"/><rect x="216.55" y="148.98" width="1.15" height="1.15"/><rect x="216.55" y="157.21" width="1.15" height="1.15"/><rect x="216.55" y="165.44" width="1.15" height="1.15"/><rect x="216.55" y="173.67" width="1.15" height="1.15"/><rect x="216.55" y="181.90" width="1.15" height="1.15"/><rect x="216.55" y="190.13" width="1.15" height="1.15"/><rect x="216.55" y="198.36" width="1.15" height="1.15"/><rect x="216.55" y="206.59" width="1.15" height="1.15"/><rect x="216.55" y="214.82" width="1.15" height="1.15"/><rect x="216.55" y="223.05" width="1.15" height="1.15"/><rect x="216.55" y="231.28" width="1.15" height="1.15"/><rect x="216.55" y="239.51" width="1.15" height="1.15"/><rect x="216.55" y="247.74" width="1.15" height="1.15"/><rect x="216.55" y="255.97" width="1.15" height="1.15"/><rect x="216.55" y="264.20" width="1.15" height="1.15"/><rect x="216.55" y="272.43" width="1.15" height="1.15"/><rect x="216.55" y="280.66" width="1.15" height="1.15"/><rect x="216.55" y="288.89" width="1.15" height="1.15"/><rect x="216.55" y="297.12" width="1.15" height="1.15"/><rect x="216.55" y="305.35" width="1.15" height="1.15"/><rect x="216.55" y="313.58" width="1.15" height="1.15"/><rect x="216.55" y="321.81" width="1.15" height="1.15"/><rect x="216.55" y="330.04" width="1.15" height="1.15"/><rect x="216.55" y="338.27" width="1.15" height="1.15"/><rect x="216.55" y="346.50" width="1.15" height="1.15"/><rect x="216.55" y="354.73" width="1.15" height="1.15"/><rect x="216.55" y="362.96" width="1.15" height="1.15"/><rect x="216.55" y="371.19" width="1.15" height="1.15"/><rect x="216.55" y="379.42" width="1.15" height="1.15"/><rect x="216.55" y="387.65" width="1.15" height="1.15"/><rect x="216.55" y="395.88" width="1.15" height="1.15"/><rect x="216.55" y="404.11" width="1.15" height="1.15"/><rect x="216.55" y="412.34" width="1.15" height="1.15"/><rect x="216.55" y="420.57" width="1.15" height="1.15"/><rect x="216.55" y="428.80" width="1.15" height="1.15"/><rect x="287.45" y="41.99" width="1.15" height="1.15"/><rect x="287.45" y="50.22" width="1.15" height="1.15"/><rect x="287.45" y="58.45" width="1.15" height="1.15"/><rect x="287.45" y="66.68" width="1.15" height="1.15"/><rect x="287.45" y="74.91" width="1.15" height="1.15"/><rect x="287.45" y="83.14" width="1.15" height="1.15"/><rect x="287.45" y="91.37" width="1.15" height="1.15"/><rect x="287.45" y="99.60" width="1.15" height="1.15"/><rect x="287.45" y="107.83" width="1.15" height="1.15"/><rect x="287.45" y="116.06" width="1.15" height="1.15"/><rect x="287.45" y="124.29" width="1.15" height="1.15"/><rect x="287.45" y="132.52" width="1.15" height="1.15"/><rect x="287.45" y="140.75" width="1.15" height="1.15"/><rect x="287.45" y="148.98" width="1.15" height="1.15"/><rect x="287.45" y="157.21" width="1.15" height="1.15"/><rect x="287.45" y="165.44" width="1.15" height="1.15"/><rect x="287.45" y="173.67" width="1.15" height="1.15"/><rect x="287.45" y="181.90" width="1.15" height="1.15"/><rect x="287.45" y="190.13" width="1.15" height="1.15"/><rect x="287.45" y="198.36" width="1.15" height="1.15"/><rect x="287.45" y="206.59" width="1.15" height="1.15"/><rect x="287.45" y="214.82" width="1.15" height="1.15"/><rect x="287.45" y="223.05" width="1.15" height="1.15"/><rect x="287.45" y="231.28" width="1.15" height="1.15"/><rect x="287.45" y="239.51" width="1.15" height="1.15"/><rect x="287.45" y="247.74" width="1.15" height="1.15"/><rect x="287.45" y="255.97" width="1.15" height="1.15"/><rect x="287.45" y="264.20" width="1.15" height="1.15"/><rect x="287.45" y="272.43" width="1.15" height="1.15"/><rect x="287.45" y="280.66" width="1.15" height="1.15"/><rect x="287.45" y="288.89" width="1.15" height="1.15"/><rect x="287.45" y="297.12" width="1.15" height="1.15"/><rect x="287.45" y="305.35" width="1.15" height="1.15"/><rect x="287.45" y="313.58" width="1.15" height="1.15"/><rect x="287.45" y="321.81" width="1.15" height="1.15"/><rect x="287.45" y="330.04" width="1.15" height="1.15"/><rect x="287.45" y="338.27" width="1.15" height="1.15"/><rect x="287.45" y="346.50" width="1.15" height="1.15"/><rect x="287.45" y="354.73" width="1.15" height="1.15"/><rect x="287.45" y="362.96" width="1.15" height="1.15"/><rect x="287.45" y="371.19" width="1.15" height="1.15"/><rect x="287.45" y="379.42" width="1.15" height="1.15"/><rect x="287.45" y="387.65" width="1.15" height="1.15"/><rect x="287.45" y="395.88" width="1.15" height="1.15"/><rect x="287.45" y="404.11" width="1.15" height="1.15"/><rect x="287.45" y="412.34" width="1.15" height="1.15"/><rect x="287.45" y="420.57" width="1.15" height="1.15"/><rect x="287.45" y="428.80" width="1.15" height="1.15"/><rect x="358.35" y="41.99" width="1.15" height="1.15"/><rect x="358.35" y="50.22" width="1.15" height="1.15"/><rect x="358.35" y="58.45" width="1.15" height="1.15"/><rect x="358.35" y="66.68" width="1.15" height="1.15"/><rect x="358.35" y="74.91" width="1.15" height="1.15"/><rect x="358.35" y="83.14" width="1.15" height="1.15"/><rect x="358.35" y="91.37" width="1.15" height="1.15"/><rect x="358.35" y="99.60" width="1.15" height="1.15"/><rect x="358.35" y="107.83" width="1.15" height="1.15"/><rect x="358.35" y="116.06" width="1.15" height="1.15"/><rect x="358.35" y="124.29" width="1.15" height="1.15"/><rect x="358.35" y="132.52" width="1.15" height="1.15"/><rect x="358.35" y="140.75" width="1.15" height="1.15"/><rect x="358.35" y="148.98" width="1.15" height="1.15"/><rect x="358.35" y="157.21" width="1.15" height="1.15"/><rect x="358.35" y="165.44" width="1.15" height="1.15"/><rect x="358.35" y="173.67" width="1.15" height="1.15"/><rect x="358.35" y="181.90" width="1.15" height="1.15"/><rect x="358.35" y="190.13" width="1.15" height="1.15"/><rect x="358.35" y="198.36" width="1.15" height="1.15"/><rect x="358.35" y="206.59" width="1.15" height="1.15"/><rect x="358.35" y="214.82" width="1.15" height="1.15"/><rect x="358.35" y="223.05" width="1.15" height="1.15"/><rect x="358.35" y="231.28" width="1.15" height="1.15"/><rect x="358.35" y="239.51" width="1.15" height="1.15"/><rect x="358.35" y="247.74" width="1.15" height="1.15"/><rect x="358.35" y="255.97" width="1.15" height="1.15"/><rect x="358.35" y="264.20" width="1.15" height="1.15"/><rect x="358.35" y="272.43" width="1.15" height="1.15"/><rect x="358.35" y="280.66" width="1.15" height="1.15"/><rect x="358.35" y="288.89" width="1.15" height="1.15"/><rect x="358.35" y="297.12" width="1.15" height="1.15"/><rect x="358.35" y="305.35" width="1.15" height="1.15"/><rect x="358.35" y="313.58" width="1.15" height="1.15"/><rect x="358.35" y="321.81" width="1.15" height="1.15"/><rect x="358.35" y="330.04" width="1.15" height="1.15"/><rect x="358.35" y="338.27" width="1.15" height="1.15"/><rect x="358.35" y="346.50" width="1.15" height="1.15"/><rect x="358.35" y="354.73" width="1.15" height="1.15"/><rect x="358.35" y="362.96" width="1.15" height="1.15"/><rect x="358.35" y="371.19" width="1.15" height="1.15"/><rect x="358.35" y="379.42" width="1.15" height="1.15"/><rect x="358.35" y="387.65" width="1.15" height="1.15"/><rect x="358.35" y="395.88" width="1.15" height="1.15"/><rect x="358.35" y="404.11" width="1.15" height="1.15"/><rect x="358.35" y="412.34" width="1.15" height="1.15"/><rect x="358.35" y="420.57" width="1.15" height="1.15"/><rect x="358.35" y="428.80" width="1.15" height="1.15"/><rect x="429.25" y="41.99" width="1.15" height="1.15"/><rect x="429.25" y="50.22" width="1.15" height="1.15"/><rect x="429.25" y="58.45" width="1.15" height="1.15"/><rect x="429.25" y="66.68" width="1.15" height="1.15"/><rect x="429.25" y="74.91" width="1.15" height="1.15"/><rect x="429.25" y="83.14" width="1.15" height="1.15"/><rect x="429.25" y="91.37" width="1.15" height="1.15"/><rect x="429.25" y="99.60" width="1.15" height="1.15"/><rect x="429.25" y="107.83" width="1.15" height="1.15"/><rect x="429.25" y="116.06" width="1.15" height="1.15"/><rect x="429.25" y="124.29" width="1.15" height="1.15"/><rect x="429.25" y="132.52" width="1.15" height="1.15"/><rect x="429.25" y="140.75" width="1.15" height="1.15"/><rect x="429.25" y="148.98" width="1.15" height="1.15"/><rect x="429.25" y="157.21" width="1.15" height="1.15"/><rect x="429.25" y="165.44" width="1.15" height="1.15"/><rect x="429.25" y="173.67" width="1.15" height="1.15"/><rect x="429.25" y="181.90" width="1.15" height="1.15"/><rect x="429.25" y="190.13" width="1.15" height="1.15"/><rect x="429.25" y="198.36" width="1.15" height="1.15"/><rect x="429.25" y="206.59" width="1.15" height="1.15"/><rect x="429.25" y="214.82" width="1.15" height="1.15"/><rect x="429.25" y="223.05" width="1.15" height="1.15"/><rect x="429.25" y="231.28" width="1.15" height="1.15"/><rect x="429.25" y="239.51" width="1.15" height="1.15"/><rect x="429.25" y="247.74" width="1.15" height="1.15"/><rect x="429.25" y="255.97" width="1.15" height="1.15"/><rect x="429.25" y="264.20" width="1.15" height="1.15"/><rect x="429.25" y="272.43" width="1.15" height="1.15"/><rect x="429.25" y="280.66" width="1.15" height="1.15"/><rect x="429.25" y="288.89" width="1.15" height="1.15"/><rect x="429.25" y="297.12" width="1.15" height="1.15"/><rect x="429.25" y="305.35" width="1.15" height="1.15"/><rect x="429.25" y="313.58" width="1.15" height="1.15"/><rect x="429.25" y="321.81" width="1.15" height="1.15"/><rect x="429.25" y="330.04" width="1.15" height="1.15"/><rect x="429.25" y="338.27" width="1.15" height="1.15"/><rect x="429.25" y="346.50" width="1.15" height="1.15"/><rect x="429.25" y="354.73" width="1.15" height="1.15"/><rect x="429.25" y="362.96" width="1.15" height="1.15"/><rect x="429.25" y="371.19" width="1.15" height="1.15"/><rect x="429.25" y="379.42" width="1.15" height="1.15"/><rect x="429.25" y="387.65" width="1.15" height="1.15"/><rect x="429.25" y="395.88" width="1.15" height="1.15"/><rect x="429.25" y="404.11" width="1.15" height="1.15"/><rect x="429.25" y="412.34" width="1.15" height="1.15"/><rect x="429.25" y="420.57" width="1.15" height="1.15"/><rect x="429.25" y="428.80" width="1.15" height="1.15"/><rect x="500.15" y="41.99" width="1.15" height="1.15"/><rect x="500.15" y="50.22" width="1.15" height="1.15"/><rect x="500.15" y="58.45" width="1.15" height="1.15"/><rect x="500.15" y="66.68" width="1.15" height="1.15"/><rect x="500.15" y="74.91" width="1.15" height="1.15"/><rect x="500.15" y="83.14" width="1.15" height="1.15"/><rect x="500.15" y="91.37" width="1.15" height="1.15"/><rect x="500.15" y="99.60" width="1.15" height="1.15"/><rect x="500.15" y="107.83" width="1.15" height="1.15"/><rect x="500.15" y="116.06" width="1.15" height="1.15"/><rect x="500.15" y="124.29" width="1.15" height="1.15"/><rect x="500.15" y="132.52" width="1.15" height="1.15"/><rect x="500.15" y="140.75" width="1.15" height="1.15"/><rect x="500.15" y="148.98" width="1.15" height="1.15"/><rect x="500.15" y="157.21" width="1.15" height="1.15"/><rect x="500.15" y="165.44" width="1.15" height="1.15"/><rect x="500.15" y="173.67" width="1.15" height="1.15"/><rect x="500.15" y="181.90" width="1.15" height="1.15"/><rect x="500.15" y="190.13" width="1.15" height="1.15"/><rect x="500.15" y="198.36" width="1.15" height="1.15"/><rect x="500.15" y="206.59" width="1.15" height="1.15"/><rect x="500.15" y="214.82" width="1.15" height="1.15"/><rect x="500.15" y="223.05" width="1.15" height="1.15"/><rect x="500.15" y="231.28" width="1.15" height="1.15"/><rect x="500.15" y="239.51" width="1.15" height="1.15"/><rect x="500.15" y="247.74" width="1.15" height="1.15"/><rect x="500.15" y="255.97" width="1.15" height="1.15"/><rect x="500.15" y="264.20" width="1.15" height="1.15"/><rect x="500.15" y="272.43" width="1.15" height="1.15"/><rect x="500.15" y="280.66" width="1.15" height="1.15"/><rect x="500.15" y="288.89" width="1.15" height="1.15"/><rect x="500.15" y="297.12" width="1.15" height="1.15"/><rect x="500.15" y="305.35" width="1.15" height="1.15"/><rect x="500.15" y="313.58" width="1.15" height="1.15"/><rect x="500.15" y="321.81" width="1.15" height="1.15"/><rect x="500.15" y="330.04" width="1.15" height="1.15"/><rect x="500.15" y="338.27" width="1.15" height="1.15"/><rect x="500.15" y="346.50" width="1.15" height="1.15"/><rect x="500.15" y="354.73" width="1.15" height="1.15"/><rect x="500.15" y="362.96" width="1.15" height="1.15"/><rect x="500.15" y="371.19" width="1.15" height="1.15"/><rect x="500.15" y="379.42" width="1.15" height="1.15"/><rect x="500.15" y="387.65" width="1.15" height="1.15"/><rect x="500.15" y="395.88" width="1.15" height="1.15"/><rect x="500.15" y="404.11" width="1.15" height="1.15"/><rect x="500.15" y="412.34" width="1.15" height="1.15"/><rect x="500.15" y="420.57" width="1.15" height="1.15"/><rect x="500.15" y="428.80" width="1.15" height="1.15"/><rect x="571.05" y="41.99" width="1.15" height="1.15"/><rect x="571.05" y="50.22" width="1.15" height="1.15"/><rect x="571.05" y="58.45" width="1.15" height="1.15"/><rect x="571.05" y="66.68" width="1.15" height="1.15"/><rect x="571.05" y="74.91" width="1.15" height="1.15"/><rect x="571.05" y="83.14" width="1.15" height="1.15"/><rect x="571.05" y="91.37" width="1.15" height="1.15"/><rect x="571.05" y="99.60" width="1.15" height="1.15"/><rect x="571.05" y="107.83" width="1.15" height="1.15"/><rect x="571.05" y="116.06" width="1.15" height="1.15"/><rect x="571.05" y="124.29" width="1.15" height="1.15"/><rect x="571.05" y="132.52" width="1.15" height="1.15"/><rect x="571.05" y="140.75" width="1.15" height="1.15"/><rect x="571.05" y="148.98" width="1.15" height="1.15"/><rect x="571.05" y="157.21" width="1.15" height="1.15"/><rect x="571.05" y="165.44" width="1.15" height="1.15"/><rect x="571.05" y="173.67" width="1.15" height="1.15"/><rect x="571.05" y="181.90" width="1.15" height="1.15"/><rect x="571.05" y="190.13" width="1.15" height="1.15"/><rect x="571.05" y="198.36" width="1.15" height="1.15"/><rect x="571.05" y="206.59" width="1.15" height="1.15"/><rect x="571.05" y="214.82" width="1.15" height="1.15"/><rect x="571.05" y="223.05" width="1.15" height="1.15"/><rect x="571.05" y="231.28" width="1.15" height="1.15"/><rect x="571.05" y="239.51" width="1.15" height="1.15"/><rect x="571.05" y="247.74" width="1.15" height="1.15"/><rect x="571.05" y="255.97" width="1.15" height="1.15"/><rect x="571.05" y="264.20" width="1.15" height="1.15"/><rect x="571.05" y="272.43" width="1.15" height="1.15"/><rect x="571.05" y="280.66" width="1.15" height="1.15"/><rect x="571.05" y="288.89" width="1.15" height="1.15"/><rect x="571.05" y="297.12" width="1.15" height="1.15"/><rect x="571.05" y="305.35" width="1.15" height="1.15"/><rect x="571.05" y="313.58" width="1.15" height="1.15"/><rect x="571.05" y="321.81" width="1.15" height="1.15"/><rect x="571.05" y="330.04" width="1.15" height="1.15"/><rect x="571.05" y="338.27" width="1.15" height="1.15"/><rect x="571.05" y="346.50" width="1.15" height="1.15"/><rect x="571.05" y="354.73" width="1.15" height="1.15"/><rect x="571.05" y="362.96" width="1.15" height="1.15"/><rect x="571.05" y="371.19" width="1.15" height="1.15"/><rect x="571.05" y="379.42" width="1.15" height="1.15"/><rect x="571.05" y="387.65" width="1.15" height="1.15"/><rect x="571.05" y="395.88" width="1.15" height="1.15"/><rect x="571.05" y="404.11" width="1.15" height="1.15"/><rect x="571.05" y="412.34" width="1.15" height="1.15"/><rect x="571.05" y="420.57" width="1.15" height="1.15"/><rect x="571.05" y="428.80" width="1.15" height="1.15"/><rect x="641.95" y="41.99" width="1.15" height="1.15"/><rect x="641.95" y="50.22" width="1.15" height="1.15"/><rect x="641.95" y="58.45" width="1.15" height="1.15"/><rect x="641.95" y="66.68" width="1.15" height="1.15"/><rect x="641.95" y="74.91" width="1.15" height="1.15"/><rect x="641.95" y="83.14" width="1.15" height="1.15"/><rect x="641.95" y="91.37" width="1.15" height="1.15"/><rect x="641.95" y="99.60" width="1.15" height="1.15"/><rect x="641.95" y="107.83" width="1.15" height="1.15"/><rect x="641.95" y="116.06" width="1.15" height="1.15"/><rect x="641.95" y="124.29" width="1.15" height="1.15"/><rect x="641.95" y="132.52" width="1.15" height="1.15"/><rect x="641.95" y="140.75" width="1.15" height="1.15"/><rect x="641.95" y="148.98" width="1.15" height="1.15"/><rect x="641.95" y="157.21" width="1.15" height="1.15"/><rect x="641.95" y="165.44" width="1.15" height="1.15"/><rect x="641.95" y="173.67" width="1.15" height="1.15"/><rect x="641.95" y="181.90" width="1.15" height="1.15"/><rect x="641.95" y="190.13" width="1.15" height="1.15"/><rect x="641.95" y="198.36" width="1.15" height="1.15"/><rect x="641.95" y="206.59" width="1.15" height="1.15"/><rect x="641.95" y="214.82" width="1.15" height="1.15"/><rect x="641.95" y="223.05" width="1.15" height="1.15"/><rect x="641.95" y="231.28" width="1.15" height="1.15"/><rect x="641.95" y="239.51" width="1.15" height="1.15"/><rect x="641.95" y="247.74" width="1.15" height="1.15"/><rect x="641.95" y="255.97" width="1.15" height="1.15"/><rect x="641.95" y="264.20" width="1.15" height="1.15"/><rect x="641.95" y="272.43" width="1.15" height="1.15"/><rect x="641.95" y="280.66" width="1.15" height="1.15"/><rect x="641.95" y="288.89" width="1.15" height="1.15"/><rect x="641.95" y="297.12" width="1.15" height="1.15"/><rect x="641.95" y="305.35" width="1.15" height="1.15"/><rect x="641.95" y="313.58" width="1.15" height="1.15"/><rect x="641.95" y="321.81" width="1.15" height="1.15"/><rect x="641.95" y="330.04" width="1.15" height="1.15"/><rect x="641.95" y="338.27" width="1.15" height="1.15"/><rect x="641.95" y="346.50" width="1.15" height="1.15"/><rect x="641.95" y="354.73" width="1.15" height="1.15"/><rect x="641.95" y="362.96" width="1.15" height="1.15"/><rect x="641.95" y="371.19" width="1.15" height="1.15"/><rect x="641.95" y="379.42" width="1.15" height="1.15"/><rect x="641.95" y="387.65" width="1.15" height="1.15"/><rect x="641.95" y="395.88" width="1.15" height="1.15"/><rect x="641.95" y="404.11" width="1.15" height="1.15"/><rect x="641.95" y="412.34" width="1.15" height="1.15"/><rect x="641.95" y="420.57" width="1.15" height="1.15"/><rect x="641.95" y="428.80" width="1.15" height="1.15"/></g><path d="M359.1 52 V445.8" stroke="#a4a4a4" stroke-width="1.1" stroke-dasharray="2.2 2.4"/><path d="M24.5 182.5 H699" stroke="#747474" stroke-width="1.1" stroke-dasharray="2.1 2.0"/><path d="M39.85 154.00 L39.90 217.50 M110.75 211.00 L110.80 147.50 M146.20 154.00 L146.25 217.50 M181.65 211.00 L181.70 147.50 M288.00 154.00 L288.05 217.50 M358.90 211.00 L358.95 147.50 M394.35 154.00 L394.40 217.50 M429.80 211.00 L429.85 147.50 M536.15 154.00 L536.20 217.50 M607.05 211.00 L607.10 147.50 M642.50 154.00 L642.55 217.50 M677.95 211.00 L678.00 147.50" stroke="#8f8410" stroke-width="1.0" fill="none"/><path d="M5.20 153.95 L5.58 153.07 L5.96 155.30 L6.34 154.08 L6.72 153.93 L7.10 153.98 L7.48 154.56 L7.86 153.81 L8.24 153.90 L8.62 153.96 L9.00 153.77 L9.38 152.85 L9.76 152.78 L10.14 153.98 L10.52 154.04 L10.90 153.78 L11.28 154.00 L11.66 155.30 L12.04 154.23 L12.42 153.77 L12.80 154.15 L13.18 155.22 L13.56 154.08 L13.94 153.98 L14.32 154.08 L14.70 153.83 L15.08 155.15 L15.46 153.93 L15.84 154.29 L16.22 154.12 L16.60 154.07 L16.98 153.85 L17.36 153.08 L17.74 154.03 L18.12 153.92 L18.50 154.32 L18.88 153.88 L19.26 154.00 L19.64 154.14 L20.02 154.16 L20.40 154.30 L20.78 153.97 L21.16 154.10 L21.54 153.12 L21.92 154.21 L22.30 154.01 L22.68 154.29 L23.06 153.91 L23.44 153.97 L23.82 153.94 L24.20 154.25 L24.58 153.75 L24.96 152.64 L25.34 154.17 L25.72 153.03 L26.10 154.17 L26.48 153.94 L26.86 153.95 L27.24 153.67 L27.62 153.63 L28.00 154.17 L28.38 154.15 L28.76 153.96 L29.14 154.10 L29.52 153.70 L29.90 154.04 L30.28 154.18 L30.66 153.94 L31.04 154.01 L31.42 155.00 L31.80 154.16 L32.18 153.90 L32.56 153.72 L32.94 154.00 L33.32 154.01 L33.70 153.87 L34.08 154.04 L34.46 153.87 L34.84 154.35 L35.22 155.08 L35.60 154.55 L35.98 153.77 L36.36 152.89 L36.74 154.14 L37.12 153.99 L37.50 153.99 L37.88 155.17 L38.26 153.70 L38.64 153.88 L39.02 154.02 L39.40 154.17 L39.78 153.49 L39.85 154.61 M39.90 217.50 L40.55 207.80 L41.15 212.60 L41.75 210.20 L42.25 210.17 L42.63 210.81 L43.01 210.88 L43.39 210.81 L43.77 210.15 L44.15 210.01 L44.53 210.69 L44.91 211.06 L45.29 210.88 L45.67 211.02 L46.05 211.27 L46.43 211.30 L46.81 211.32 L47.19 210.62 L47.57 210.78 L47.95 210.75 L48.33 212.40 L48.71 209.61 L49.09 210.78 L49.47 210.83 L49.85 210.94 L50.23 211.02 L50.61 210.91 L50.99 210.94 L51.37 211.34 L51.75 211.03 L52.13 210.56 L52.51 210.76 L52.89 210.99 L53.27 210.78 L53.65 210.95 L54.03 211.34 L54.41 210.67 L54.79 210.31 L55.17 210.87 L55.55 210.90 L55.93 210.81 L56.31 211.25 L56.69 211.24 L57.07 211.80 L57.45 211.11 L57.83 210.81 L58.21 211.14 L58.59 211.11 L58.97 211.18 L59.35 211.06 L59.73 212.26 L60.11 211.18 L60.49 211.02 L60.87 211.53 L61.25 211.23 L61.63 210.18 L62.01 212.56 L62.39 210.78 L62.77 210.57 L63.15 210.77 L63.53 210.98 L63.91 211.04 L64.29 210.88 L64.67 211.09 L65.05 211.01 L65.43 210.02 L65.81 211.15 L66.19 209.60 L66.57 210.93 L66.95 210.99 L67.33 211.13 L67.71 210.87 L68.09 210.97 L68.47 210.95 L68.85 210.00 L69.23 210.88 L69.61 210.96 L69.99 211.29 L70.37 211.23 L70.75 211.10 L71.13 210.83 L71.51 211.18 L71.89 210.98 L72.27 210.87 L72.65 210.13 L73.03 210.71 L73.41 212.19 L73.79 210.92 L74.17 210.86 L74.55 210.89 L74.93 211.03 L75.31 211.52 L75.69 210.87 L76.07 211.17 L76.45 211.74 L76.83 210.95 L77.21 211.29 L77.59 210.26 L77.97 211.20 L78.35 210.94 L78.73 210.94 L79.11 211.24 L79.49 211.35 L79.87 211.03 L80.25 210.68 L80.63 210.92 L81.01 210.92 L81.39 210.79 L81.77 210.98 L82.15 211.28 L82.53 210.82 L82.91 211.30 L83.29 211.03 L83.67 210.46 L84.05 210.92 L84.43 211.30 L84.81 211.23 L85.19 210.79 L85.57 209.41 L85.95 210.75 L86.33 211.92 L86.71 211.14 L87.09 211.07 L87.47 210.97 L87.85 210.46 L88.23 210.70 L88.61 211.04 L88.99 212.24 L89.37 210.94 L89.75 210.92 L90.13 210.93 L90.51 211.09 L90.89 210.98 L91.27 210.96 L91.65 210.84 L92.03 211.25 L92.41 211.71 L92.79 210.64 L93.17 211.09 L93.55 210.98 L93.93 211.14 L94.31 210.90 L94.69 210.95 L95.07 211.25 L95.45 211.27 L95.83 210.96 L96.21 210.86 L96.59 211.02 L96.97 211.00 L97.35 210.96 L97.73 211.10 L98.11 211.01 L98.49 210.99 L98.87 211.33 L99.25 211.31 L99.63 210.95 L100.01 211.19 L100.39 210.84 L100.77 210.90 L101.15 211.09 L101.53 211.03 L101.91 211.14 L102.29 210.94 L102.67 211.07 L103.05 211.18 L103.43 211.11 L103.81 210.74 L104.19 211.80 L104.57 210.90 L104.95 210.05 L105.33 210.87 L105.71 210.97 L106.09 211.15 L106.47 210.88 L106.85 211.08 L107.23 212.40 L107.61 211.20 L107.99 210.83 L108.37 211.29 L108.75 211.00 L109.13 211.12 L109.51 210.75 L109.89 212.31 L110.27 211.00 L110.65 210.86 L110.75 210.48 M110.80 147.50 L111.45 157.20 L112.05 152.40 L112.65 154.80 L113.15 154.00 L113.53 153.90 L113.91 153.77 L114.29 154.36 L114.67 154.23 L115.05 153.84 L115.43 154.07 L115.81 154.15 L116.19 154.15 L116.57 155.80 L116.95 153.95 L117.33 154.09 L117.71 154.07 L118.09 154.30 L118.47 153.89 L118.85 152.85 L119.23 154.07 L119.61 155.07 L119.99 153.87 L120.37 154.01 L120.75 153.91 L121.13 154.06 L121.51 155.74 L121.89 153.97 L122.27 154.17 L122.65 155.09 L123.03 153.96 L123.41 154.23 L123.79 154.03 L124.17 153.99 L124.55 154.30 L124.93 154.18 L125.31 154.04 L125.69 154.11 L126.07 154.34 L126.45 154.15 L126.83 154.51 L127.21 154.02 L127.59 154.14 L127.97 153.09 L128.35 153.93 L128.73 154.25 L129.11 152.52 L129.49 155.15 L129.87 154.05 L130.25 152.97 L130.63 154.82 L131.01 153.90 L131.39 153.83 L131.77 154.01 L132.15 154.01 L132.53 154.10 L132.91 153.97 L133.29 153.77 L133.67 154.29 L134.05 154.22 L134.43 154.07 L134.81 154.07 L135.19 155.10 L135.57 153.86 L135.95 153.86 L136.33 152.51 L136.71 153.93 L137.09 153.93 L137.47 154.50 L137.85 153.96 L138.23 153.11 L138.61 154.02 L138.99 154.23 L139.37 153.88 L139.75 154.10 L140.13 154.11 L140.51 153.94 L140.89 154.15 L141.27 153.69 L141.65 153.92 L142.03 153.12 L142.41 154.11 L142.79 154.17 L143.17 153.89 L143.55 153.03 L143.93 154.08 L144.31 154.05 L144.69 153.86 L145.07 154.05 L145.45 153.85 L145.83 153.70 L146.20 154.56 M146.25 217.50 L146.90 207.80 L147.50 212.60 L148.10 210.20 L148.60 211.26 L148.98 210.82 L149.36 210.05 L149.74 211.01 L150.12 210.11 L150.50 211.24 L150.88 210.99 L151.26 212.14 L151.64 210.50 L152.02 210.82 L152.40 211.06 L152.78 211.26 L153.16 210.05 L153.54 211.15 L153.92 210.84 L154.30 211.09 L154.68 210.97 L155.06 209.44 L155.44 209.75 L155.82 211.09 L156.20 210.81 L156.58 211.04 L156.96 211.02 L157.34 210.70 L157.72 209.91 L158.10 210.87 L158.48 211.10 L158.86 210.94 L159.24 211.03 L159.62 210.97 L160.00 211.02 L160.38 210.88 L160.76 210.84 L161.14 209.83 L161.52 211.05 L161.90 209.61 L162.28 211.03 L162.66 211.24 L163.04 211.15 L163.42 211.10 L163.80 211.13 L164.18 211.18 L164.56 211.15 L164.94 211.03 L165.32 211.10 L165.70 210.93 L166.08 211.01 L166.46 211.23 L166.84 209.58 L167.22 210.90 L167.60 210.91 L167.98 212.27 L168.36 211.12 L168.74 209.63 L169.12 210.58 L169.50 210.83 L169.88 211.14 L170.26 210.90 L170.64 210.86 L171.02 209.58 L171.40 211.18 L171.78 211.03 L172.16 211.34 L172.54 210.07 L172.92 211.20 L173.30 211.08 L173.68 210.00 L174.06 210.96 L174.44 211.94 L174.82 210.14 L175.20 210.96 L175.58 210.50 L175.96 210.27 L176.34 212.32 L176.72 211.27 L177.10 210.99 L177.48 211.52 L177.86 210.89 L178.24 211.75 L178.62 211.28 L179.00 211.69 L179.38 210.72 L179.76 210.95 L180.14 210.75 L180.52 212.27 L180.90 210.87 L181.28 212.53 L181.65 210.77 M181.70 147.50 L182.35 157.20 L182.95 152.40 L183.55 154.80 L184.05 154.04 L184.43 154.35 L184.81 154.11 L185.19 154.26 L185.57 153.97 L185.95 155.13 L186.33 154.00 L186.71 154.22 L187.09 153.37 L187.47 153.94 L187.85 154.07 L188.23 153.77 L188.61 153.87 L188.99 153.89 L189.37 154.02 L189.75 154.05 L190.13 154.07 L190.51 154.04 L190.89 155.04 L191.27 153.76 L191.65 153.87 L192.03 152.94 L192.41 154.00 L192.79 153.50 L193.17 155.56 L193.55 154.08 L193.93 155.50 L194.31 154.39 L194.69 154.02 L195.07 153.99 L195.45 152.50 L195.83 154.30 L196.21 154.29 L196.59 153.99 L196.97 154.07 L197.35 153.82 L197.73 153.59 L198.11 153.53 L198.49 153.82 L198.87 154.95 L199.25 153.89 L199.63 153.84 L200.01 153.88 L200.39 154.38 L200.77 153.96 L201.15 152.76 L201.53 154.00 L201.91 153.24 L202.29 153.01 L202.67 154.29 L203.05 153.14 L203.43 153.79 L203.81 154.65 L204.19 154.24 L204.57 153.93 L204.95 154.01 L205.33 153.68 L205.71 154.02 L206.09 154.05 L206.47 154.00 L206.85 153.91 L207.23 153.89 L207.61 154.02 L207.99 153.95 L208.37 154.17 L208.75 154.06 L209.13 153.97 L209.51 154.03 L209.89 153.73 L210.27 152.98 L210.65 153.65 L211.03 153.86 L211.41 154.82 L211.79 154.13 L212.17 154.00 L212.55 154.23 L212.93 154.01 L213.31 154.09 L213.69 154.21 L214.07 153.97 L214.45 154.48 L214.83 152.79 L215.21 153.78 L215.59 153.91 L215.97 155.47 L216.35 153.99 L216.73 153.79 L217.11 153.93 L217.49 152.65 L217.87 154.19 L218.25 154.19 L218.63 154.26 L219.01 154.06 L219.39 153.76 L219.77 154.08 L220.15 153.94 L220.53 153.86 L220.91 153.81 L221.29 153.76 L221.67 154.01 L222.05 153.63 L222.43 154.32 L222.81 153.95 L223.19 154.04 L223.57 154.50 L223.95 154.12 L224.33 152.41 L224.71 154.09 L225.09 152.73 L225.47 155.49 L225.85 153.85 L226.23 154.55 L226.61 153.84 L226.99 154.19 L227.37 153.75 L227.75 154.17 L228.13 153.76 L228.51 153.83 L228.89 152.69 L229.27 154.81 L229.65 154.26 L230.03 153.97 L230.41 153.89 L230.79 154.39 L231.17 154.05 L231.55 154.30 L231.93 155.21 L232.31 154.12 L232.69 154.09 L233.07 154.13 L233.45 153.96 L233.83 153.87 L234.21 155.21 L234.59 153.59 L234.97 154.26 L235.35 155.01 L235.73 154.21 L236.11 155.21 L236.49 154.05 L236.87 153.92 L237.25 153.95 L237.63 154.51 L238.01 153.85 L238.39 153.88 L238.77 152.91 L239.15 153.87 L239.53 153.95 L239.91 153.76 L240.29 153.72 L240.67 154.95 L241.05 154.24 L241.43 153.98 L241.81 154.19 L242.19 154.01 L242.57 154.01 L242.95 154.01 L243.33 154.17 L243.71 153.81 L244.09 153.78 L244.47 154.04 L244.85 153.95 L245.23 154.02 L245.61 153.89 L245.99 154.03 L246.37 154.00 L246.75 153.13 L247.13 154.09 L247.51 154.03 L247.89 153.87 L248.27 153.76 L248.65 154.68 L249.03 153.91 L249.41 153.77 L249.79 154.19 L250.17 153.83 L250.55 155.66 L250.93 154.18 L251.31 154.00 L251.69 154.12 L252.07 154.09 L252.45 154.15 L252.83 153.94 L253.21 154.21 L253.59 153.94 L253.97 153.89 L254.35 154.06 L254.73 154.01 L255.11 154.03 L255.49 153.92 L255.87 154.09 L256.25 152.63 L256.63 153.85 L257.01 154.17 L257.39 154.05 L257.77 154.21 L258.15 154.08 L258.53 153.85 L258.91 153.84 L259.29 154.00 L259.67 153.80 L260.05 153.71 L260.43 153.92 L260.81 154.25 L261.19 154.31 L261.57 154.08 L261.95 152.72 L262.33 154.05 L262.71 154.01 L263.09 153.93 L263.47 153.92 L263.85 154.08 L264.23 155.32 L264.61 152.46 L264.99 153.92 L265.37 152.64 L265.75 153.86 L266.13 153.94 L266.51 153.91 L266.89 154.19 L267.27 152.85 L267.65 154.09 L268.03 155.17 L268.41 153.81 L268.79 153.94 L269.17 153.90 L269.55 154.20 L269.93 154.11 L270.31 153.98 L270.69 154.01 L271.07 154.80 L271.45 153.89 L271.83 152.99 L272.21 154.32 L272.59 153.96 L272.97 153.89 L273.35 153.78 L273.73 153.92 L274.11 153.34 L274.49 153.97 L274.87 154.03 L275.25 153.93 L275.63 154.20 L276.01 155.90 L276.39 152.94 L276.77 153.78 L277.15 153.86 L277.53 153.85 L277.91 154.33 L278.29 153.88 L278.67 154.50 L279.05 154.20 L279.43 153.87 L279.81 154.24 L280.19 153.86 L280.57 153.90 L280.95 153.78 L281.33 154.21 L281.71 155.00 L282.09 152.89 L282.47 154.27 L282.85 155.34 L283.23 154.22 L283.61 154.13 L283.99 154.00 L284.37 153.54 L284.75 153.90 L285.13 153.80 L285.51 154.00 L285.89 155.04 L286.27 154.03 L286.65 154.26 L287.03 153.77 L287.41 153.19 L287.79 154.06 L288.00 153.69 M288.05 217.50 L288.70 207.80 L289.30 212.60 L289.90 210.20 L290.40 210.78 L290.78 211.27 L291.16 211.21 L291.54 210.89 L291.92 210.92 L292.30 212.19 L292.68 211.05 L293.06 211.01 L293.44 210.74 L293.82 211.02 L294.20 210.57 L294.58 211.22 L294.96 209.55 L295.34 210.97 L295.72 211.05 L296.10 211.01 L296.48 210.61 L296.86 211.03 L297.24 210.71 L297.62 211.86 L298.00 210.68 L298.38 210.61 L298.76 210.89 L299.14 211.04 L299.52 211.01 L299.90 211.06 L300.28 211.36 L300.66 211.50 L301.04 211.21 L301.42 211.26 L301.80 210.92 L302.18 212.29 L302.56 210.85 L302.94 211.12 L303.32 211.16 L303.70 210.59 L304.08 210.54 L304.46 210.81 L304.84 210.77 L305.22 211.24 L305.60 210.07 L305.98 210.91 L306.36 211.10 L306.74 209.43 L307.12 211.09 L307.50 211.20 L307.88 211.12 L308.26 212.17 L308.64 211.11 L309.02 211.20 L309.40 210.21 L309.78 211.36 L310.16 211.25 L310.54 211.23 L310.92 210.99 L311.30 211.15 L311.68 210.90 L312.06 211.06 L312.44 211.18 L312.82 211.23 L313.20 210.78 L313.58 210.99 L313.96 211.85 L314.34 211.18 L314.72 211.08 L315.10 211.10 L315.48 212.41 L315.86 209.83 L316.24 210.90 L316.62 210.65 L317.00 211.30 L317.38 211.13 L317.76 211.34 L318.14 211.12 L318.52 211.97 L318.90 210.82 L319.28 211.00 L319.66 212.47 L320.04 211.12 L320.42 210.85 L320.80 211.17 L321.18 211.08 L321.56 211.30 L321.94 210.82 L322.32 212.23 L322.70 210.18 L323.08 210.16 L323.46 210.97 L323.84 211.04 L324.22 210.99 L324.60 210.97 L324.98 211.38 L325.36 211.02 L325.74 210.48 L326.12 211.17 L326.50 211.16 L326.88 209.67 L327.26 212.51 L327.64 211.19 L328.02 211.32 L328.40 210.66 L328.78 211.18 L329.16 211.32 L329.54 210.88 L329.92 210.89 L330.30 211.18 L330.68 211.31 L331.06 209.25 L331.44 211.14 L331.82 210.94 L332.20 211.72 L332.58 211.19 L332.96 211.03 L333.34 211.21 L333.72 210.94 L334.10 211.02 L334.48 211.39 L334.86 211.10 L335.24 210.80 L335.62 209.88 L336.00 210.79 L336.38 210.97 L336.76 211.68 L337.14 211.27 L337.52 211.20 L337.90 210.91 L338.28 211.23 L338.66 210.87 L339.04 210.99 L339.42 210.84 L339.80 211.04 L340.18 211.19 L340.56 211.13 L340.94 210.89 L341.32 212.75 L341.70 211.03 L342.08 211.11 L342.46 210.95 L342.84 210.93 L343.22 211.14 L343.60 211.04 L343.98 211.01 L344.36 210.83 L344.74 211.24 L345.12 210.79 L345.50 211.27 L345.88 210.80 L346.26 210.58 L346.64 211.09 L347.02 211.10 L347.40 211.05 L347.78 210.92 L348.16 211.16 L348.54 211.00 L348.92 212.33 L349.30 210.80 L349.68 210.49 L350.06 211.01 L350.44 211.09 L350.82 210.60 L351.20 210.79 L351.58 211.07 L351.96 210.80 L352.34 211.16 L352.72 211.09 L353.10 210.62 L353.48 212.29 L353.86 212.15 L354.24 211.21 L354.62 210.68 L355.00 209.68 L355.38 211.20 L355.76 210.92 L356.14 211.24 L356.52 210.65 L356.90 211.14 L357.28 210.94 L357.66 211.01 L358.04 211.08 L358.42 211.00 L358.80 210.71 L358.90 211.00 M358.95 147.50 L359.60 157.20 L360.20 152.40 L360.80 154.80 L361.30 154.07 L361.68 154.11 L362.06 154.05 L362.44 153.57 L362.82 154.00 L363.20 153.91 L363.58 155.47 L363.96 154.08 L364.34 154.42 L364.72 155.41 L365.10 154.11 L365.48 153.39 L365.86 154.99 L366.24 152.46 L366.62 153.05 L367.00 154.05 L367.38 153.85 L367.76 153.95 L368.14 154.26 L368.52 152.83 L368.90 155.39 L369.28 154.00 L369.66 154.85 L370.04 153.93 L370.42 153.99 L370.80 154.05 L371.18 154.79 L371.56 153.98 L371.94 152.47 L372.32 154.21 L372.70 154.44 L373.08 154.13 L373.46 154.30 L373.84 153.78 L374.22 154.23 L374.60 153.94 L374.98 153.75 L375.36 154.20 L375.74 154.16 L376.12 153.84 L376.50 155.14 L376.88 154.17 L377.26 153.79 L377.64 154.35 L378.02 154.20 L378.40 153.95 L378.78 153.83 L379.16 154.15 L379.54 153.99 L379.92 154.04 L380.30 154.09 L380.68 154.10 L381.06 153.79 L381.44 153.92 L381.82 153.91 L382.20 154.10 L382.58 153.85 L382.96 153.92 L383.34 154.19 L383.72 153.77 L384.10 153.82 L384.48 153.88 L384.86 152.49 L385.24 155.50 L385.62 154.00 L386.00 152.90 L386.38 154.11 L386.76 154.06 L387.14 153.95 L387.52 153.92 L387.90 154.61 L388.28 154.00 L388.66 154.08 L389.04 153.82 L389.42 153.73 L389.80 154.06 L390.18 154.11 L390.56 153.95 L390.94 154.77 L391.32 153.60 L391.70 152.89 L392.08 154.23 L392.46 154.06 L392.84 154.30 L393.22 152.50 L393.60 154.14 L393.98 154.24 L394.35 153.81 M394.40 217.50 L395.05 207.80 L395.65 212.60 L396.25 210.20 L396.75 210.76 L397.13 211.00 L397.51 212.09 L397.89 210.79 L398.27 210.73 L398.65 210.84 L399.03 211.17 L399.41 211.04 L399.79 211.18 L400.17 210.89 L400.55 210.89 L400.93 210.91 L401.31 211.21 L401.69 210.93 L402.07 210.86 L402.45 210.65 L402.83 210.94 L403.21 210.88 L403.59 211.90 L403.97 209.58 L404.35 211.00 L404.73 211.07 L405.11 212.36 L405.49 211.16 L405.87 211.01 L406.25 211.24 L406.63 210.90 L407.01 210.14 L407.39 211.10 L407.77 209.53 L408.15 210.67 L408.53 211.79 L408.91 210.94 L409.29 211.01 L409.67 211.13 L410.05 212.23 L410.43 209.80 L410.81 211.09 L411.19 210.67 L411.57 211.03 L411.95 210.97 L412.33 211.29 L412.71 211.04 L413.09 212.09 L413.47 211.27 L413.85 210.88 L414.23 211.03 L414.61 211.04 L414.99 210.96 L415.37 211.12 L415.75 211.11 L416.13 210.95 L416.51 211.98 L416.89 210.82 L417.27 210.82 L417.65 210.94 L418.03 211.25 L418.41 211.07 L418.79 210.88 L419.17 210.58 L419.55 210.88 L419.93 211.00 L420.31 212.54 L420.69 211.15 L421.07 211.39 L421.45 210.95 L421.83 210.96 L422.21 211.04 L422.59 209.73 L422.97 210.99 L423.35 210.89 L423.73 211.18 L424.11 211.10 L424.49 210.93 L424.87 209.64 L425.25 210.93 L425.63 210.78 L426.01 212.67 L426.39 211.98 L426.77 210.75 L427.15 210.55 L427.53 210.79 L427.91 210.94 L428.29 210.27 L428.67 212.18 L429.05 210.69 L429.43 210.91 L429.80 211.23 M429.85 147.50 L430.50 157.20 L431.10 152.40 L431.70 154.80 L432.20 153.99 L432.58 154.14 L432.96 154.00 L433.34 153.86 L433.72 154.11 L434.10 154.28 L434.48 153.76 L434.86 154.06 L435.24 154.22 L435.62 153.86 L436.00 154.03 L436.38 153.90 L436.76 154.26 L437.14 153.59 L437.52 153.78 L437.90 153.98 L438.28 154.13 L438.66 155.37 L439.04 154.14 L439.42 152.94 L439.80 154.08 L440.18 152.87 L440.56 155.78 L440.94 153.80 L441.32 154.15 L441.70 154.01 L442.08 153.81 L442.46 153.97 L442.84 153.89 L443.22 154.15 L443.60 154.43 L443.98 154.09 L444.36 153.99 L444.74 153.96 L445.12 154.93 L445.50 153.78 L445.88 153.92 L446.26 155.48 L446.64 153.87 L447.02 155.26 L447.40 153.00 L447.78 154.02 L448.16 153.83 L448.54 153.79 L448.92 153.92 L449.30 153.80 L449.68 153.81 L450.06 153.98 L450.44 154.19 L450.82 154.21 L451.20 153.97 L451.58 153.82 L451.96 153.93 L452.34 154.17 L452.72 154.00 L453.10 154.41 L453.48 153.98 L453.86 154.91 L454.24 152.24 L454.62 153.88 L455.00 154.11 L455.38 154.08 L455.76 154.29 L456.14 154.21 L456.52 155.40 L456.90 153.89 L457.28 153.88 L457.66 153.86 L458.04 154.17 L458.42 154.07 L458.80 153.81 L459.18 154.02 L459.56 155.00 L459.94 154.09 L460.32 154.06 L460.70 154.47 L461.08 153.74 L461.46 152.65 L461.84 154.11 L462.22 154.06 L462.60 153.79 L462.98 154.27 L463.36 154.21 L463.74 154.10 L464.12 154.91 L464.50 152.98 L464.88 154.08 L465.26 154.26 L465.64 154.11 L466.02 154.31 L466.40 154.32 L466.78 154.17 L467.16 154.08 L467.54 154.10 L467.92 153.71 L468.30 153.65 L468.68 154.00 L469.06 153.71 L469.44 153.96 L469.82 155.46 L470.20 154.20 L470.58 153.98 L470.96 154.17 L471.34 154.03 L471.72 153.73 L472.10 153.32 L472.48 155.29 L472.86 154.27 L473.24 153.78 L473.62 153.87 L474.00 153.84 L474.38 154.29 L474.76 154.03 L475.14 153.66 L475.52 154.22 L475.90 153.97 L476.28 154.89 L476.66 153.96 L477.04 154.11 L477.42 153.98 L477.80 154.47 L478.18 152.74 L478.56 154.20 L478.94 152.95 L479.32 154.21 L479.70 153.73 L480.08 153.95 L480.46 153.79 L480.84 154.37 L481.22 153.77 L481.60 154.01 L481.98 155.26 L482.36 153.91 L482.74 154.12 L483.12 153.79 L483.50 153.27 L483.88 153.87 L484.26 154.06 L484.64 153.89 L485.02 153.87 L485.40 153.89 L485.78 153.95 L486.16 153.96 L486.54 154.33 L486.92 153.89 L487.30 155.09 L487.68 154.33 L488.06 154.11 L488.44 154.33 L488.82 154.10 L489.20 154.30 L489.58 154.36 L489.96 155.09 L490.34 154.36 L490.72 154.10 L491.10 155.35 L491.48 153.90 L491.86 153.83 L492.24 153.88 L492.62 152.78 L493.00 153.28 L493.38 154.21 L493.76 154.09 L494.14 154.04 L494.52 153.99 L494.90 154.00 L495.28 153.83 L495.66 153.81 L496.04 152.80 L496.42 153.58 L496.80 154.01 L497.18 154.84 L497.56 154.23 L497.94 154.06 L498.32 153.98 L498.70 154.02 L499.08 153.76 L499.46 153.93 L499.84 154.22 L500.22 153.77 L500.60 153.53 L500.98 154.26 L501.36 153.91 L501.74 155.38 L502.12 153.92 L502.50 153.39 L502.88 153.17 L503.26 154.14 L503.64 153.91 L504.02 153.80 L504.40 153.80 L504.78 153.89 L505.16 153.86 L505.54 154.21 L505.92 154.10 L506.30 154.86 L506.68 153.92 L507.06 153.84 L507.44 154.05 L507.82 154.27 L508.20 153.68 L508.58 154.05 L508.96 154.02 L509.34 154.11 L509.72 153.76 L510.10 153.96 L510.48 154.17 L510.86 154.33 L511.24 154.20 L511.62 154.65 L512.00 154.14 L512.38 153.84 L512.76 153.87 L513.14 154.13 L513.52 153.90 L513.90 154.28 L514.28 153.91 L514.66 154.03 L515.04 153.08 L515.42 154.21 L515.80 154.01 L516.18 154.19 L516.56 154.13 L516.94 153.04 L517.32 153.57 L517.70 153.88 L518.08 153.77 L518.46 153.01 L518.84 154.07 L519.22 154.77 L519.60 154.32 L519.98 154.09 L520.36 153.88 L520.74 153.90 L521.12 154.19 L521.50 154.20 L521.88 153.94 L522.26 153.97 L522.64 154.19 L523.02 154.10 L523.40 154.26 L523.78 155.43 L524.16 153.94 L524.54 152.70 L524.92 153.76 L525.30 154.01 L525.68 155.19 L526.06 153.80 L526.44 154.01 L526.82 153.11 L527.20 154.28 L527.58 152.84 L527.96 153.93 L528.34 154.01 L528.72 153.39 L529.10 153.64 L529.48 154.11 L529.86 155.31 L530.24 154.17 L530.62 154.10 L531.00 153.67 L531.38 154.26 L531.76 154.00 L532.14 154.20 L532.52 153.96 L532.90 154.10 L533.28 154.27 L533.66 154.76 L534.04 154.93 L534.42 154.61 L534.80 154.04 L535.18 154.21 L535.56 154.27 L535.94 153.95 L536.15 154.08 M536.20 217.50 L536.85 207.80 L537.45 212.60 L538.05 210.20 L538.55 210.39 L538.93 211.05 L539.31 209.79 L539.69 210.86 L540.07 210.73 L540.45 211.06 L540.83 210.90 L541.21 211.07 L541.59 211.05 L541.97 210.75 L542.35 211.15 L542.73 210.22 L543.11 210.89 L543.49 210.96 L543.87 211.14 L544.25 210.89 L544.63 210.96 L545.01 211.06 L545.39 210.90 L545.77 210.96 L546.15 211.03 L546.53 211.88 L546.91 212.56 L547.29 209.69 L547.67 211.25 L548.05 210.84 L548.43 210.97 L548.81 211.49 L549.19 211.01 L549.57 210.71 L549.95 210.83 L550.33 211.04 L550.71 210.66 L551.09 209.91 L551.47 211.25 L551.85 210.96 L552.23 210.95 L552.61 212.43 L552.99 211.33 L553.37 209.45 L553.75 211.09 L554.13 210.16 L554.51 211.05 L554.89 211.29 L555.27 211.15 L555.65 211.93 L556.03 210.93 L556.41 212.30 L556.79 212.01 L557.17 210.95 L557.55 210.98 L557.93 210.95 L558.31 211.25 L558.69 210.96 L559.07 209.21 L559.45 210.65 L559.83 211.03 L560.21 212.64 L560.59 211.33 L560.97 210.93 L561.35 210.02 L561.73 210.71 L562.11 210.04 L562.49 210.95 L562.87 211.08 L563.25 212.31 L563.63 212.70 L564.01 209.99 L564.39 211.11 L564.77 211.18 L565.15 211.31 L565.53 211.27 L565.91 209.45 L566.29 210.77 L566.67 211.03 L567.05 209.54 L567.43 210.72 L567.81 211.27 L568.19 212.48 L568.57 211.00 L568.95 210.89 L569.33 211.27 L569.71 210.81 L570.09 210.82 L570.47 210.88 L570.85 211.12 L571.23 210.88 L571.61 211.09 L571.99 210.97 L572.37 211.00 L572.75 212.59 L573.13 211.19 L573.51 210.82 L573.89 211.28 L574.27 211.09 L574.65 211.03 L575.03 210.82 L575.41 211.04 L575.79 211.30 L576.17 211.17 L576.55 210.88 L576.93 210.61 L577.31 210.70 L577.69 210.08 L578.07 211.09 L578.45 210.95 L578.83 211.01 L579.21 211.16 L579.59 211.39 L579.97 211.01 L580.35 211.14 L580.73 211.16 L581.11 209.98 L581.49 211.21 L581.87 210.82 L582.25 210.50 L582.63 211.00 L583.01 210.44 L583.39 210.24 L583.77 211.06 L584.15 211.68 L584.53 211.00 L584.91 210.85 L585.29 210.92 L585.67 211.14 L586.05 210.92 L586.43 210.71 L586.81 211.27 L587.19 211.11 L587.57 211.41 L587.95 212.15 L588.33 211.00 L588.71 210.58 L589.09 212.00 L589.47 211.04 L589.85 210.95 L590.23 210.97 L590.61 210.90 L590.99 210.87 L591.37 210.80 L591.75 210.94 L592.13 211.10 L592.51 210.72 L592.89 210.92 L593.27 212.15 L593.65 210.20 L594.03 210.82 L594.41 212.66 L594.79 211.15 L595.17 210.80 L595.55 211.24 L595.93 210.73 L596.31 211.04 L596.69 210.92 L597.07 210.83 L597.45 210.90 L597.83 211.02 L598.21 211.53 L598.59 211.00 L598.97 210.71 L599.35 210.93 L599.73 211.18 L600.11 211.09 L600.49 212.54 L600.87 211.66 L601.25 211.15 L601.63 209.56 L602.01 210.91 L602.39 211.66 L602.77 211.14 L603.15 212.34 L603.53 211.31 L603.91 210.88 L604.29 209.89 L604.67 210.83 L605.05 212.10 L605.43 210.62 L605.81 211.01 L606.19 211.01 L606.57 210.87 L606.95 211.06 L607.05 210.66 M607.10 147.50 L607.75 157.20 L608.35 152.40 L608.95 154.80 L609.45 152.34 L609.83 154.01 L610.21 153.76 L610.59 153.98 L610.97 153.63 L611.35 154.21 L611.73 154.23 L612.11 153.99 L612.49 154.07 L612.87 153.98 L613.25 153.11 L613.63 153.98 L614.01 153.93 L614.39 155.43 L614.77 154.01 L615.15 154.57 L615.53 153.86 L615.91 153.87 L616.29 153.87 L616.67 154.07 L617.05 154.35 L617.43 153.36 L617.81 153.77 L618.19 153.94 L618.57 154.03 L618.95 153.83 L619.33 153.90 L619.71 154.06 L620.09 154.40 L620.47 154.17 L620.85 155.18 L621.23 153.52 L621.61 154.22 L621.99 153.15 L622.37 153.16 L622.75 154.98 L623.13 154.30 L623.51 154.09 L623.89 153.10 L624.27 154.01 L624.65 154.03 L625.03 153.89 L625.41 155.48 L625.79 155.06 L626.17 155.45 L626.55 153.78 L626.93 154.33 L627.31 153.92 L627.69 154.01 L628.07 154.44 L628.45 153.67 L628.83 154.00 L629.21 154.20 L629.59 154.12 L629.97 153.95 L630.35 153.66 L630.73 154.78 L631.11 154.14 L631.49 154.01 L631.87 154.38 L632.25 154.02 L632.63 154.40 L633.01 155.12 L633.39 153.79 L633.77 153.92 L634.15 154.14 L634.53 154.01 L634.91 154.33 L635.29 154.24 L635.67 153.60 L636.05 153.80 L636.43 154.02 L636.81 153.74 L637.19 154.14 L637.57 154.25 L637.95 153.95 L638.33 153.78 L638.71 154.17 L639.09 154.16 L639.47 152.86 L639.85 153.60 L640.23 154.09 L640.61 154.02 L640.99 154.06 L641.37 154.01 L641.75 154.06 L642.13 154.29 L642.50 154.27 M642.55 217.50 L643.20 207.80 L643.80 212.60 L644.40 210.20 L644.90 209.79 L645.28 211.33 L645.66 209.48 L646.04 212.65 L646.42 210.00 L646.80 211.10 L647.18 210.79 L647.56 212.14 L647.94 210.92 L648.32 211.76 L648.70 210.95 L649.08 210.97 L649.46 210.70 L649.84 211.21 L650.22 209.66 L650.60 211.05 L650.98 210.92 L651.36 211.01 L651.74 210.89 L652.12 209.69 L652.50 210.98 L652.88 211.04 L653.26 211.19 L653.64 210.88 L654.02 210.94 L654.40 209.73 L654.78 212.44 L655.16 211.26 L655.54 211.09 L655.92 211.23 L656.30 212.05 L656.68 210.47 L657.06 211.20 L657.44 211.03 L657.82 210.62 L658.20 210.98 L658.58 209.96 L658.96 209.27 L659.34 211.29 L659.72 210.91 L660.10 210.98 L660.48 210.87 L660.86 210.86 L661.24 211.13 L661.62 211.21 L662.00 211.19 L662.38 210.92 L662.76 211.08 L663.14 210.98 L663.52 211.03 L663.90 210.98 L664.28 211.12 L664.66 210.99 L665.04 210.88 L665.42 210.69 L665.80 211.00 L666.18 211.05 L666.56 210.97 L666.94 211.52 L667.32 210.85 L667.70 210.78 L668.08 211.84 L668.46 211.03 L668.84 210.95 L669.22 210.72 L669.60 211.19 L669.98 210.90 L670.36 209.28 L670.74 211.19 L671.12 210.94 L671.50 211.12 L671.88 211.11 L672.26 211.08 L672.64 209.88 L673.02 210.73 L673.40 209.62 L673.78 210.85 L674.16 210.39 L674.54 211.05 L674.92 210.95 L675.30 211.46 L675.68 210.88 L676.06 210.97 L676.44 210.92 L676.82 211.09 L677.20 211.10 L677.58 210.93 L677.95 211.57 M678.00 147.50 L678.65 157.20 L679.25 152.40 L679.85 154.80 L680.35 154.05 L680.73 154.03 L681.11 153.61 L681.49 155.45 L681.87 154.02 L682.25 155.41 L682.63 154.04 L683.01 153.81 L683.39 154.13 L683.77 154.96 L684.15 154.03 L684.53 153.10 L684.91 153.90 L685.29 153.34 L685.67 153.45 L686.05 153.04 L686.43 154.08 L686.81 154.18 L687.19 154.14 L687.57 154.02 L687.95 153.90 L688.33 154.13 L688.71 155.23 L689.09 154.01 L689.47 154.03 L689.85 154.22 L690.23 154.03 L690.61 154.02 L690.99 154.23 L691.37 154.22 L691.75 154.29 L692.13 154.12 L692.51 153.14 L692.89 153.69 L693.27 154.08 L693.65 153.88 L694.03 154.53 L694.41 152.64 L694.79 155.03 L695.17 153.76 L695.55 154.03 L695.93 154.28 L696.31 153.99 L696.69 154.23 L697.07 154.75 L697.45 154.17 L697.83 153.96 L698.21 153.98 L698.59 153.12 L698.97 154.10 L699.35 153.75 L699.73 153.88 L700.11 154.10 L700.49 153.62 L700.87 155.72 L701.25 155.55 L701.63 154.05 L702.01 155.44 L702.39 153.94 L702.77 154.18 L703.15 154.12 L703.53 154.06 L703.91 152.88 L704.29 153.62 L704.67 153.93 L705.05 153.90 L705.43 153.99 L705.81 153.69 L706.19 153.81 L706.57 154.03 L706.95 154.07 L707.33 154.13 L707.71 154.28 L708.09 153.84 L708.47 152.92 L708.85 153.71 L709.23 155.06 L709.61 154.03 L709.99 153.50 L710.37 153.76 L710.75 153.29 L711.13 153.91 L711.51 154.06 L711.89 153.95 L712.27 153.81 L712.65 154.29 L712.80 153.99" stroke="#f4e51c" stroke-width="1.7" fill="none" stroke-linejoin="round"/><path d="M39.85 305.30 L39.90 240.80 M110.75 248.80 L110.80 313.30 M146.20 305.30 L146.25 240.80 M181.65 248.80 L181.70 313.30 M288.00 305.30 L288.05 240.80 M358.90 248.80 L358.95 313.30 M394.35 305.30 L394.40 240.80 M429.80 248.80 L429.85 313.30 M536.15 305.30 L536.20 240.80 M607.05 248.80 L607.10 313.30 M642.50 305.30 L642.55 240.80 M677.95 248.80 L678.00 313.30" stroke="#0d5f68" stroke-width="0.9" fill="none"/><path d="M5.20 305.48 L5.58 305.46 L5.96 305.16 L6.34 305.12 L6.72 305.12 L7.10 305.25 L7.48 305.42 L7.86 305.02 L8.24 305.22 L8.62 305.36 L9.00 305.17 L9.38 305.26 L9.76 305.32 L10.14 305.11 L10.52 305.34 L10.90 305.36 L11.28 305.31 L11.66 305.24 L12.04 303.63 L12.42 304.73 L12.80 305.32 L13.18 305.46 L13.56 305.40 L13.94 305.31 L14.32 305.41 L14.70 305.45 L15.08 305.10 L15.46 304.48 L15.84 306.11 L16.22 305.37 L16.60 303.81 L16.98 305.51 L17.36 306.57 L17.74 305.38 L18.12 306.94 L18.50 305.45 L18.88 305.31 L19.26 305.39 L19.64 305.38 L20.02 306.32 L20.40 305.29 L20.78 305.51 L21.16 305.62 L21.54 305.36 L21.92 305.10 L22.30 305.06 L22.68 305.35 L23.06 305.47 L23.44 305.38 L23.82 305.42 L24.20 305.19 L24.58 304.81 L24.96 305.95 L25.34 304.76 L25.72 305.67 L26.10 303.72 L26.48 305.22 L26.86 304.90 L27.24 305.27 L27.62 305.37 L28.00 305.23 L28.38 305.33 L28.76 304.93 L29.14 305.42 L29.52 305.23 L29.90 305.06 L30.28 305.27 L30.66 306.18 L31.04 305.60 L31.42 303.96 L31.80 305.60 L32.18 305.44 L32.56 304.74 L32.94 305.40 L33.32 305.18 L33.70 305.08 L34.08 305.41 L34.46 305.05 L34.84 305.03 L35.22 305.54 L35.60 305.47 L35.98 306.29 L36.36 305.56 L36.74 305.23 L37.12 303.71 L37.50 304.98 L37.88 305.46 L38.26 306.56 L38.64 305.12 L39.02 304.79 L39.40 305.25 L39.78 304.91 L39.85 305.31 M39.90 240.80 L40.55 252.00 L41.15 247.20 L41.75 249.60 L42.25 248.80 L42.63 248.60 L43.01 247.54 L43.39 248.62 L43.77 249.14 L44.15 248.67 L44.53 248.94 L44.91 248.91 L45.29 248.89 L45.67 248.53 L46.05 248.49 L46.43 249.12 L46.81 248.63 L47.19 248.81 L47.57 248.43 L47.95 249.82 L48.33 247.60 L48.71 248.88 L49.09 248.72 L49.47 250.22 L49.85 248.54 L50.23 248.48 L50.61 248.88 L50.99 247.24 L51.37 249.62 L51.75 250.38 L52.13 248.94 L52.51 248.61 L52.89 248.83 L53.27 248.64 L53.65 248.72 L54.03 248.79 L54.41 248.61 L54.79 250.30 L55.17 248.79 L55.55 248.73 L55.93 248.68 L56.31 247.98 L56.69 248.72 L57.07 248.90 L57.45 250.25 L57.83 248.85 L58.21 248.62 L58.59 248.84 L58.97 248.67 L59.35 248.62 L59.73 248.88 L60.11 248.85 L60.49 248.96 L60.87 248.90 L61.25 249.03 L61.63 249.11 L62.01 249.19 L62.39 248.84 L62.77 248.68 L63.15 248.82 L63.53 248.40 L63.91 248.81 L64.29 248.84 L64.67 249.20 L65.05 248.51 L65.43 248.70 L65.81 248.76 L66.19 248.56 L66.57 248.93 L66.95 248.59 L67.33 247.49 L67.71 248.90 L68.09 248.73 L68.47 248.84 L68.85 247.59 L69.23 248.78 L69.61 248.71 L69.99 248.88 L70.37 249.17 L70.75 248.79 L71.13 248.80 L71.51 249.00 L71.89 248.65 L72.27 248.87 L72.65 248.92 L73.03 248.68 L73.41 248.14 L73.79 248.67 L74.17 248.97 L74.55 248.70 L74.93 249.70 L75.31 248.59 L75.69 248.83 L76.07 247.86 L76.45 248.72 L76.83 247.66 L77.21 248.96 L77.59 248.62 L77.97 248.31 L78.35 248.85 L78.73 248.58 L79.11 248.59 L79.49 246.80 L79.87 248.92 L80.25 248.95 L80.63 248.55 L81.01 248.64 L81.39 247.78 L81.77 248.74 L82.15 249.07 L82.53 248.76 L82.91 250.04 L83.29 249.04 L83.67 248.70 L84.05 248.97 L84.43 248.79 L84.81 248.99 L85.19 249.01 L85.57 248.67 L85.95 248.85 L86.33 247.80 L86.71 248.79 L87.09 248.69 L87.47 248.71 L87.85 248.84 L88.23 248.89 L88.61 248.87 L88.99 248.82 L89.37 250.16 L89.75 248.73 L90.13 248.86 L90.51 247.51 L90.89 249.82 L91.27 247.86 L91.65 248.73 L92.03 249.92 L92.41 248.75 L92.79 247.73 L93.17 248.88 L93.55 248.88 L93.93 248.53 L94.31 248.49 L94.69 248.50 L95.07 248.82 L95.45 250.07 L95.83 247.54 L96.21 248.79 L96.59 248.96 L96.97 249.04 L97.35 248.66 L97.73 248.35 L98.11 248.76 L98.49 248.68 L98.87 248.69 L99.25 249.00 L99.63 247.61 L100.01 249.16 L100.39 249.07 L100.77 248.25 L101.15 248.81 L101.53 250.20 L101.91 249.18 L102.29 248.33 L102.67 250.52 L103.05 248.86 L103.43 247.59 L103.81 249.01 L104.19 249.11 L104.57 249.07 L104.95 248.79 L105.33 250.57 L105.71 248.78 L106.09 248.87 L106.47 248.87 L106.85 249.03 L107.23 248.84 L107.61 248.49 L107.99 248.69 L108.37 248.66 L108.75 248.86 L109.13 248.78 L109.51 248.72 L109.89 249.06 L110.27 248.97 L110.65 248.73 L110.75 248.77 M110.80 313.30 L111.45 302.10 L112.05 306.90 L112.65 304.50 L113.15 305.54 L113.53 305.38 L113.91 305.31 L114.29 305.36 L114.67 306.57 L115.05 304.14 L115.43 305.25 L115.81 305.29 L116.19 305.42 L116.57 305.39 L116.95 303.67 L117.33 304.90 L117.71 304.95 L118.09 304.92 L118.47 306.64 L118.85 305.16 L119.23 305.00 L119.61 305.53 L119.99 303.64 L120.37 306.32 L120.75 305.37 L121.13 305.22 L121.51 305.26 L121.89 306.78 L122.27 305.46 L122.65 305.47 L123.03 305.50 L123.41 304.02 L123.79 305.25 L124.17 305.12 L124.55 305.35 L124.93 305.22 L125.31 304.06 L125.69 305.17 L126.07 305.20 L126.45 304.49 L126.83 305.29 L127.21 305.58 L127.59 305.56 L127.97 305.86 L128.35 305.02 L128.73 305.36 L129.11 305.30 L129.49 306.22 L129.87 305.54 L130.25 305.18 L130.63 305.27 L131.01 305.42 L131.39 306.53 L131.77 305.63 L132.15 305.72 L132.53 305.29 L132.91 305.41 L133.29 305.91 L133.67 305.12 L134.05 305.23 L134.43 305.20 L134.81 305.03 L135.19 304.80 L135.57 306.73 L135.95 305.53 L136.33 305.11 L136.71 304.31 L137.09 306.51 L137.47 306.88 L137.85 303.99 L138.23 305.40 L138.61 304.61 L138.99 305.17 L139.37 306.07 L139.75 305.12 L140.13 306.00 L140.51 305.40 L140.89 304.09 L141.27 305.10 L141.65 305.27 L142.03 304.97 L142.41 304.13 L142.79 304.27 L143.17 305.25 L143.55 303.93 L143.93 305.46 L144.31 305.42 L144.69 305.20 L145.07 305.41 L145.45 305.50 L145.83 304.59 L146.20 304.12 M146.25 240.80 L146.90 252.00 L147.50 247.20 L148.10 249.60 L148.60 248.64 L148.98 248.99 L149.36 250.15 L149.74 248.73 L150.12 248.82 L150.50 248.85 L150.88 248.85 L151.26 248.93 L151.64 248.82 L152.02 249.80 L152.40 248.46 L152.78 250.02 L153.16 248.75 L153.54 248.13 L153.92 248.98 L154.30 250.33 L154.68 249.37 L155.06 248.82 L155.44 250.51 L155.82 248.62 L156.20 249.20 L156.58 248.35 L156.96 248.52 L157.34 248.68 L157.72 248.75 L158.10 248.70 L158.48 248.97 L158.86 248.83 L159.24 248.96 L159.62 249.49 L160.00 248.94 L160.38 248.70 L160.76 248.47 L161.14 249.01 L161.52 248.69 L161.90 248.54 L162.28 248.98 L162.66 248.78 L163.04 248.66 L163.42 248.73 L163.80 248.98 L164.18 248.84 L164.56 248.94 L164.94 248.67 L165.32 248.55 L165.70 250.40 L166.08 248.87 L166.46 248.75 L166.84 248.88 L167.22 248.61 L167.60 248.81 L167.98 248.70 L168.36 248.39 L168.74 248.61 L169.12 248.88 L169.50 248.85 L169.88 248.91 L170.26 248.91 L170.64 248.66 L171.02 248.68 L171.40 248.86 L171.78 249.12 L172.16 249.09 L172.54 249.54 L172.92 248.71 L173.30 248.79 L173.68 247.44 L174.06 248.82 L174.44 248.84 L174.82 248.76 L175.20 248.93 L175.58 248.83 L175.96 249.06 L176.34 248.97 L176.72 248.84 L177.10 248.70 L177.48 248.79 L177.86 248.64 L178.24 249.81 L178.62 248.89 L179.00 248.68 L179.38 249.15 L179.76 248.88 L180.14 248.84 L180.52 249.69 L180.90 248.70 L181.28 248.73 L181.65 249.03 M181.70 313.30 L182.35 302.10 L182.95 306.90 L183.55 304.50 L184.05 305.27 L184.43 305.63 L184.81 305.26 L185.19 305.42 L185.57 305.18 L185.95 304.61 L186.33 305.48 L186.71 305.22 L187.09 305.60 L187.47 305.42 L187.85 305.51 L188.23 305.39 L188.61 305.19 L188.99 305.16 L189.37 305.54 L189.75 305.73 L190.13 306.38 L190.51 303.69 L190.89 305.21 L191.27 305.20 L191.65 305.37 L192.03 305.11 L192.41 305.37 L192.79 304.94 L193.17 305.40 L193.55 305.44 L193.93 305.33 L194.31 305.19 L194.69 304.33 L195.07 305.36 L195.45 305.41 L195.83 305.20 L196.21 304.97 L196.59 305.24 L196.97 305.54 L197.35 305.42 L197.73 305.40 L198.11 305.65 L198.49 305.24 L198.87 305.14 L199.25 306.15 L199.63 304.41 L200.01 305.26 L200.39 305.04 L200.77 304.27 L201.15 304.32 L201.53 305.09 L201.91 305.21 L202.29 305.07 L202.67 306.48 L203.05 305.19 L203.43 306.92 L203.81 305.34 L204.19 305.29 L204.57 305.21 L204.95 304.88 L205.33 303.62 L205.71 305.31 L206.09 305.39 L206.47 306.04 L206.85 305.04 L207.23 305.53 L207.61 304.88 L207.99 306.59 L208.37 305.23 L208.75 305.40 L209.13 305.79 L209.51 305.25 L209.89 305.30 L210.27 305.43 L210.65 305.17 L211.03 305.27 L211.41 305.01 L211.79 305.55 L212.17 305.67 L212.55 305.33 L212.93 305.17 L213.31 305.33 L213.69 305.22 L214.07 305.11 L214.45 305.32 L214.83 305.29 L215.21 305.30 L215.59 305.42 L215.97 305.08 L216.35 305.54 L216.73 305.55 L217.11 305.37 L217.49 305.01 L217.87 304.23 L218.25 303.88 L218.63 305.17 L219.01 304.29 L219.39 305.19 L219.77 305.23 L220.15 305.76 L220.53 305.63 L220.91 306.42 L221.29 305.12 L221.67 305.19 L222.05 305.60 L222.43 305.18 L222.81 303.82 L223.19 305.44 L223.57 304.63 L223.95 305.34 L224.33 305.45 L224.71 305.30 L225.09 305.30 L225.47 305.32 L225.85 305.71 L226.23 305.36 L226.61 305.23 L226.99 305.26 L227.37 305.30 L227.75 305.22 L228.13 305.48 L228.51 305.33 L228.89 305.51 L229.27 305.30 L229.65 305.00 L230.03 305.31 L230.41 305.14 L230.79 304.24 L231.17 305.18 L231.55 305.31 L231.93 307.06 L232.31 305.28 L232.69 305.31 L233.07 305.37 L233.45 305.41 L233.83 305.04 L234.21 306.71 L234.59 305.28 L234.97 305.26 L235.35 304.19 L235.73 305.20 L236.11 305.21 L236.49 303.94 L236.87 305.19 L237.25 305.63 L237.63 305.09 L238.01 305.11 L238.39 305.46 L238.77 305.45 L239.15 305.66 L239.53 306.86 L239.91 305.40 L240.29 305.13 L240.67 305.35 L241.05 305.34 L241.43 305.36 L241.81 305.51 L242.19 305.44 L242.57 305.50 L242.95 305.42 L243.33 305.21 L243.71 305.51 L244.09 305.35 L244.47 303.97 L244.85 305.14 L245.23 305.45 L245.61 304.97 L245.99 305.34 L246.37 305.32 L246.75 305.40 L247.13 306.51 L247.51 305.17 L247.89 305.38 L248.27 306.59 L248.65 304.61 L249.03 305.58 L249.41 305.42 L249.79 305.98 L250.17 305.53 L250.55 305.18 L250.93 305.53 L251.31 305.50 L251.69 305.43 L252.07 305.15 L252.45 305.65 L252.83 305.31 L253.21 305.74 L253.59 305.18 L253.97 305.21 L254.35 305.67 L254.73 303.74 L255.11 305.22 L255.49 306.59 L255.87 304.51 L256.25 305.21 L256.63 305.41 L257.01 305.56 L257.39 305.70 L257.77 304.99 L258.15 305.40 L258.53 305.58 L258.91 305.23 L259.29 305.59 L259.67 305.21 L260.05 305.37 L260.43 303.91 L260.81 305.28 L261.19 305.51 L261.57 304.94 L261.95 305.13 L262.33 305.33 L262.71 305.51 L263.09 303.47 L263.47 305.08 L263.85 305.26 L264.23 305.46 L264.61 305.50 L264.99 304.41 L265.37 306.17 L265.75 305.09 L266.13 305.35 L266.51 305.70 L266.89 305.57 L267.27 305.11 L267.65 305.18 L268.03 305.48 L268.41 303.92 L268.79 306.77 L269.17 305.57 L269.55 305.44 L269.93 305.51 L270.31 305.41 L270.69 305.59 L271.07 305.11 L271.45 305.10 L271.83 305.14 L272.21 305.23 L272.59 305.44 L272.97 305.41 L273.35 305.12 L273.73 305.07 L274.11 305.09 L274.49 305.37 L274.87 305.51 L275.25 305.48 L275.63 304.24 L276.01 304.91 L276.39 305.37 L276.77 305.47 L277.15 305.67 L277.53 306.18 L277.91 305.26 L278.29 305.31 L278.67 305.50 L279.05 305.24 L279.43 305.17 L279.81 305.22 L280.19 305.07 L280.57 305.48 L280.95 304.77 L281.33 304.88 L281.71 306.86 L282.09 305.31 L282.47 306.33 L282.85 306.57 L283.23 304.87 L283.61 305.57 L283.99 305.37 L284.37 305.36 L284.75 306.57 L285.13 305.40 L285.51 305.30 L285.89 305.24 L286.27 305.23 L286.65 305.74 L287.03 305.30 L287.41 305.56 L287.79 305.32 L288.00 304.75 M288.05 240.80 L288.70 252.00 L289.30 247.20 L289.90 249.60 L290.40 248.36 L290.78 248.68 L291.16 249.72 L291.54 248.55 L291.92 248.70 L292.30 248.75 L292.68 248.85 L293.06 248.77 L293.44 248.99 L293.82 249.05 L294.20 249.73 L294.58 249.24 L294.96 248.85 L295.34 249.11 L295.72 248.68 L296.10 249.04 L296.48 248.94 L296.86 248.76 L297.24 250.14 L297.62 250.51 L298.00 248.90 L298.38 247.84 L298.76 248.98 L299.14 248.88 L299.52 249.20 L299.90 248.90 L300.28 248.80 L300.66 247.14 L301.04 248.80 L301.42 248.81 L301.80 249.08 L302.18 249.00 L302.56 249.09 L302.94 248.30 L303.32 248.95 L303.70 248.72 L304.08 248.95 L304.46 248.59 L304.84 248.70 L305.22 248.77 L305.60 248.81 L305.98 250.50 L306.36 248.77 L306.74 248.89 L307.12 247.66 L307.50 248.88 L307.88 248.86 L308.26 249.70 L308.64 248.81 L309.02 249.10 L309.40 248.75 L309.78 248.82 L310.16 248.88 L310.54 248.49 L310.92 248.77 L311.30 248.70 L311.68 248.73 L312.06 249.12 L312.44 248.72 L312.82 249.19 L313.20 248.47 L313.58 249.11 L313.96 248.44 L314.34 248.64 L314.72 248.99 L315.10 249.81 L315.48 249.21 L315.86 248.82 L316.24 248.64 L316.62 249.04 L317.00 250.14 L317.38 248.90 L317.76 248.59 L318.14 248.87 L318.52 249.00 L318.90 249.97 L319.28 248.94 L319.66 249.69 L320.04 248.87 L320.42 248.68 L320.80 248.69 L321.18 248.87 L321.56 249.27 L321.94 249.09 L322.32 248.57 L322.70 248.93 L323.08 247.69 L323.46 250.04 L323.84 249.07 L324.22 248.69 L324.60 248.82 L324.98 249.08 L325.36 248.71 L325.74 248.97 L326.12 249.03 L326.50 248.85 L326.88 248.83 L327.26 247.82 L327.64 248.84 L328.02 248.59 L328.40 248.87 L328.78 248.82 L329.16 248.47 L329.54 249.11 L329.92 249.03 L330.30 248.90 L330.68 250.29 L331.06 248.86 L331.44 247.82 L331.82 248.85 L332.20 249.21 L332.58 250.04 L332.96 248.96 L333.34 248.87 L333.72 248.83 L334.10 249.16 L334.48 250.08 L334.86 248.68 L335.24 248.75 L335.62 248.94 L336.00 248.77 L336.38 248.62 L336.76 249.03 L337.14 248.27 L337.52 250.48 L337.90 248.83 L338.28 248.59 L338.66 248.80 L339.04 248.94 L339.42 249.35 L339.80 248.64 L340.18 249.11 L340.56 248.76 L340.94 248.70 L341.32 248.52 L341.70 248.53 L342.08 248.98 L342.46 249.20 L342.84 248.97 L343.22 247.97 L343.60 248.79 L343.98 247.73 L344.36 248.81 L344.74 248.59 L345.12 249.07 L345.50 248.59 L345.88 248.64 L346.26 249.04 L346.64 248.83 L347.02 248.94 L347.40 248.79 L347.78 248.98 L348.16 248.75 L348.54 249.84 L348.92 249.51 L349.30 248.87 L349.68 248.61 L350.06 248.80 L350.44 249.00 L350.82 248.86 L351.20 248.90 L351.58 249.01 L351.96 248.78 L352.34 249.11 L352.72 248.80 L353.10 249.95 L353.48 247.42 L353.86 248.80 L354.24 249.93 L354.62 249.09 L355.00 248.38 L355.38 248.77 L355.76 248.69 L356.14 248.79 L356.52 249.65 L356.90 248.71 L357.28 248.98 L357.66 248.75 L358.04 248.88 L358.42 250.44 L358.80 248.01 L358.90 248.26 M358.95 313.30 L359.60 302.10 L360.20 306.90 L360.80 304.50 L361.30 305.37 L361.68 304.99 L362.06 306.44 L362.44 305.48 L362.82 305.28 L363.20 305.48 L363.58 305.35 L363.96 305.42 L364.34 305.19 L364.72 304.06 L365.10 306.43 L365.48 305.25 L365.86 306.54 L366.24 305.15 L366.62 305.17 L367.00 305.33 L367.38 305.58 L367.76 305.35 L368.14 305.11 L368.52 305.32 L368.90 305.22 L369.28 305.08 L369.66 304.97 L370.04 305.10 L370.42 306.95 L370.80 306.51 L371.18 305.39 L371.56 305.35 L371.94 305.62 L372.32 304.70 L372.70 305.42 L373.08 304.65 L373.46 305.50 L373.84 305.19 L374.22 305.26 L374.60 304.97 L374.98 305.37 L375.36 305.54 L375.74 305.39 L376.12 305.46 L376.50 305.40 L376.88 306.57 L377.26 305.34 L377.64 305.06 L378.02 305.13 L378.40 305.07 L378.78 306.58 L379.16 303.83 L379.54 305.17 L379.92 305.45 L380.30 304.33 L380.68 305.28 L381.06 305.14 L381.44 303.65 L381.82 305.25 L382.20 304.07 L382.58 305.31 L382.96 305.45 L383.34 305.11 L383.72 305.34 L384.10 307.08 L384.48 305.00 L384.86 305.18 L385.24 305.36 L385.62 304.99 L386.00 305.13 L386.38 306.44 L386.76 305.53 L387.14 305.29 L387.52 305.20 L387.90 305.14 L388.28 305.22 L388.66 305.43 L389.04 305.59 L389.42 305.47 L389.80 306.79 L390.18 305.41 L390.56 305.51 L390.94 305.24 L391.32 305.42 L391.70 305.63 L392.08 305.75 L392.46 305.21 L392.84 305.10 L393.22 305.26 L393.60 305.17 L393.98 304.92 L394.35 305.58 M394.40 240.80 L395.05 252.00 L395.65 247.20 L396.25 249.60 L396.75 248.97 L397.13 249.13 L397.51 248.92 L397.89 249.64 L398.27 248.96 L398.65 248.71 L399.03 248.85 L399.41 248.71 L399.79 248.90 L400.17 250.17 L400.55 248.82 L400.93 248.64 L401.31 247.56 L401.69 249.27 L402.07 248.73 L402.45 248.93 L402.83 248.60 L403.21 249.09 L403.59 248.30 L403.97 248.61 L404.35 248.85 L404.73 248.74 L405.11 248.88 L405.49 249.02 L405.87 248.43 L406.25 248.91 L406.63 248.82 L407.01 248.60 L407.39 248.50 L407.77 248.70 L408.15 248.96 L408.53 248.58 L408.91 248.76 L409.29 249.07 L409.67 248.97 L410.05 248.90 L410.43 248.72 L410.81 248.93 L411.19 249.03 L411.57 248.74 L411.95 250.16 L412.33 248.65 L412.71 248.50 L413.09 248.69 L413.47 250.62 L413.85 247.49 L414.23 248.92 L414.61 248.92 L414.99 249.04 L415.37 248.99 L415.75 248.96 L416.13 247.94 L416.51 250.07 L416.89 248.95 L417.27 248.83 L417.65 248.72 L418.03 249.10 L418.41 248.46 L418.79 250.11 L419.17 249.54 L419.55 250.01 L419.93 248.94 L420.31 248.75 L420.69 248.90 L421.07 249.79 L421.45 248.93 L421.83 248.71 L422.21 248.95 L422.59 248.94 L422.97 248.67 L423.35 249.02 L423.73 248.54 L424.11 248.74 L424.49 249.21 L424.87 248.91 L425.25 250.07 L425.63 248.60 L426.01 247.96 L426.39 248.99 L426.77 249.03 L427.15 247.29 L427.53 248.37 L427.91 248.98 L428.29 250.29 L428.67 248.81 L429.05 248.78 L429.43 248.70 L429.80 249.27 M429.85 313.30 L430.50 302.10 L431.10 306.90 L431.70 304.50 L432.20 305.35 L432.58 306.09 L432.96 305.06 L433.34 305.13 L433.72 305.17 L434.10 304.79 L434.48 305.27 L434.86 305.29 L435.24 305.83 L435.62 304.68 L436.00 305.18 L436.38 305.39 L436.76 305.07 L437.14 305.38 L437.52 305.08 L437.90 305.18 L438.28 305.64 L438.66 304.82 L439.04 305.10 L439.42 305.42 L439.80 305.56 L440.18 305.16 L440.56 305.31 L440.94 305.48 L441.32 305.51 L441.70 305.32 L442.08 305.05 L442.46 305.51 L442.84 305.22 L443.22 305.21 L443.60 305.23 L443.98 305.35 L444.36 306.63 L444.74 305.12 L445.12 305.11 L445.50 305.50 L445.88 304.91 L446.26 305.08 L446.64 305.69 L447.02 305.16 L447.40 305.34 L447.78 304.08 L448.16 305.47 L448.54 305.28 L448.92 305.44 L449.30 305.30 L449.68 306.51 L450.06 305.52 L450.44 305.53 L450.82 305.41 L451.20 304.91 L451.58 305.10 L451.96 304.24 L452.34 305.33 L452.72 305.99 L453.10 305.02 L453.48 306.34 L453.86 305.39 L454.24 305.44 L454.62 305.59 L455.00 305.10 L455.38 305.61 L455.76 305.30 L456.14 305.58 L456.52 305.78 L456.90 305.58 L457.28 305.63 L457.66 305.43 L458.04 304.98 L458.42 304.07 L458.80 305.20 L459.18 305.27 L459.56 305.16 L459.94 305.01 L460.32 305.68 L460.70 306.28 L461.08 304.82 L461.46 304.21 L461.84 305.34 L462.22 305.51 L462.60 306.33 L462.98 306.92 L463.36 305.34 L463.74 305.38 L464.12 305.38 L464.50 305.25 L464.88 305.23 L465.26 305.38 L465.64 305.08 L466.02 305.34 L466.40 305.19 L466.78 305.36 L467.16 305.82 L467.54 304.91 L467.92 305.35 L468.30 305.58 L468.68 305.02 L469.06 304.60 L469.44 305.03 L469.82 305.41 L470.20 305.78 L470.58 307.04 L470.96 304.35 L471.34 305.17 L471.72 305.52 L472.10 306.91 L472.48 305.48 L472.86 305.25 L473.24 303.71 L473.62 305.65 L474.00 305.34 L474.38 304.52 L474.76 305.82 L475.14 305.17 L475.52 305.89 L475.90 306.58 L476.28 305.25 L476.66 307.25 L477.04 307.07 L477.42 306.81 L477.80 305.36 L478.18 304.14 L478.56 304.99 L478.94 305.56 L479.32 305.49 L479.70 305.25 L480.08 305.06 L480.46 305.11 L480.84 304.78 L481.22 305.25 L481.60 305.33 L481.98 305.48 L482.36 306.38 L482.74 305.38 L483.12 305.43 L483.50 305.31 L483.88 304.85 L484.26 306.81 L484.64 305.12 L485.02 304.41 L485.40 305.08 L485.78 304.36 L486.16 305.23 L486.54 304.93 L486.92 305.12 L487.30 306.49 L487.68 305.41 L488.06 305.25 L488.44 305.46 L488.82 305.36 L489.20 305.52 L489.58 305.16 L489.96 304.58 L490.34 305.11 L490.72 305.27 L491.10 304.31 L491.48 305.29 L491.86 306.81 L492.24 305.37 L492.62 305.22 L493.00 305.44 L493.38 305.49 L493.76 306.26 L494.14 305.05 L494.52 306.68 L494.90 305.78 L495.28 305.17 L495.66 305.27 L496.04 305.78 L496.42 305.24 L496.80 305.39 L497.18 305.46 L497.56 305.46 L497.94 304.96 L498.32 305.28 L498.70 305.56 L499.08 305.23 L499.46 303.88 L499.84 304.33 L500.22 305.54 L500.60 305.33 L500.98 305.42 L501.36 305.24 L501.74 305.14 L502.12 304.51 L502.50 305.48 L502.88 305.30 L503.26 305.21 L503.64 304.85 L504.02 305.54 L504.40 305.06 L504.78 305.20 L505.16 305.46 L505.54 305.56 L505.92 305.35 L506.30 305.27 L506.68 305.40 L507.06 305.47 L507.44 306.05 L507.82 305.36 L508.20 305.13 L508.58 305.80 L508.96 305.20 L509.34 305.93 L509.72 305.52 L510.10 305.34 L510.48 304.39 L510.86 305.44 L511.24 305.14 L511.62 305.32 L512.00 305.98 L512.38 305.37 L512.76 305.16 L513.14 305.60 L513.52 305.41 L513.90 305.30 L514.28 305.14 L514.66 305.42 L515.04 304.84 L515.42 305.06 L515.80 304.20 L516.18 305.14 L516.56 305.60 L516.94 305.43 L517.32 305.21 L517.70 305.74 L518.08 305.41 L518.46 305.21 L518.84 305.40 L519.22 305.29 L519.60 305.48 L519.98 305.39 L520.36 305.33 L520.74 305.20 L521.12 305.39 L521.50 305.09 L521.88 305.29 L522.26 304.09 L522.64 305.37 L523.02 305.52 L523.40 305.30 L523.78 305.32 L524.16 305.28 L524.54 305.16 L524.92 305.43 L525.30 305.40 L525.68 305.01 L526.06 304.97 L526.44 304.90 L526.82 305.05 L527.20 305.13 L527.58 305.26 L527.96 306.74 L528.34 304.20 L528.72 304.78 L529.10 305.28 L529.48 305.47 L529.86 305.43 L530.24 305.36 L530.62 306.23 L531.00 305.30 L531.38 305.09 L531.76 304.12 L532.14 305.20 L532.52 304.10 L532.90 304.12 L533.28 306.61 L533.66 303.92 L534.04 305.32 L534.42 307.05 L534.80 305.55 L535.18 305.55 L535.56 304.25 L535.94 304.03 L536.15 305.34 M536.20 240.80 L536.85 252.00 L537.45 247.20 L538.05 249.60 L538.55 247.84 L538.93 250.27 L539.31 249.20 L539.69 248.78 L540.07 248.79 L540.45 247.97 L540.83 247.60 L541.21 248.78 L541.59 248.61 L541.97 250.70 L542.35 248.89 L542.73 248.56 L543.11 248.90 L543.49 248.91 L543.87 249.04 L544.25 248.79 L544.63 248.76 L545.01 248.50 L545.39 248.58 L545.77 248.76 L546.15 248.95 L546.53 248.86 L546.91 249.14 L547.29 248.79 L547.67 249.18 L548.05 248.80 L548.43 249.88 L548.81 249.42 L549.19 250.14 L549.57 248.91 L549.95 250.42 L550.33 248.38 L550.71 248.65 L551.09 248.76 L551.47 249.02 L551.85 247.83 L552.23 248.80 L552.61 248.07 L552.99 248.65 L553.37 250.13 L553.75 248.97 L554.13 247.56 L554.51 247.82 L554.89 249.00 L555.27 249.46 L555.65 249.04 L556.03 248.90 L556.41 248.87 L556.79 250.26 L557.17 249.05 L557.55 248.61 L557.93 250.37 L558.31 248.91 L558.69 247.93 L559.07 248.95 L559.45 248.64 L559.83 248.53 L560.21 248.52 L560.59 249.98 L560.97 248.55 L561.35 249.83 L561.73 248.89 L562.11 248.86 L562.49 249.29 L562.87 248.80 L563.25 249.69 L563.63 249.06 L564.01 248.95 L564.39 248.59 L564.77 248.60 L565.15 249.85 L565.53 249.63 L565.91 249.04 L566.29 248.73 L566.67 249.15 L567.05 248.79 L567.43 248.64 L567.81 248.82 L568.19 248.42 L568.57 248.75 L568.95 248.86 L569.33 248.55 L569.71 249.58 L570.09 248.84 L570.47 248.86 L570.85 249.77 L571.23 248.73 L571.61 247.39 L571.99 248.92 L572.37 248.69 L572.75 248.16 L573.13 249.07 L573.51 248.71 L573.89 248.61 L574.27 248.65 L574.65 248.79 L575.03 248.82 L575.41 249.91 L575.79 248.73 L576.17 249.06 L576.55 248.82 L576.93 250.00 L577.31 248.78 L577.69 249.10 L578.07 248.70 L578.45 248.90 L578.83 249.30 L579.21 250.07 L579.59 247.72 L579.97 249.79 L580.35 247.27 L580.73 248.59 L581.11 248.88 L581.49 247.40 L581.87 249.85 L582.25 247.66 L582.63 248.97 L583.01 250.04 L583.39 248.61 L583.77 248.60 L584.15 248.94 L584.53 248.84 L584.91 248.90 L585.29 248.79 L585.67 248.74 L586.05 248.95 L586.43 248.73 L586.81 248.64 L587.19 248.77 L587.57 248.76 L587.95 248.64 L588.33 248.74 L588.71 247.38 L589.09 248.64 L589.47 249.02 L589.85 248.84 L590.23 249.18 L590.61 248.50 L590.99 248.87 L591.37 248.87 L591.75 248.84 L592.13 248.82 L592.51 248.55 L592.89 247.56 L593.27 248.87 L593.65 248.93 L594.03 248.65 L594.41 247.24 L594.79 248.94 L595.17 249.14 L595.55 247.59 L595.93 248.68 L596.31 248.92 L596.69 248.97 L597.07 249.00 L597.45 248.85 L597.83 248.96 L598.21 248.84 L598.59 247.54 L598.97 248.65 L599.35 250.14 L599.73 248.82 L600.11 248.51 L600.49 248.82 L600.87 247.28 L601.25 248.62 L601.63 248.75 L602.01 248.06 L602.39 248.76 L602.77 248.84 L603.15 248.76 L603.53 248.61 L603.91 247.33 L604.29 249.06 L604.67 249.09 L605.05 248.51 L605.43 249.04 L605.81 248.99 L606.19 250.53 L606.57 249.18 L606.95 247.60 L607.05 248.69 M607.10 313.30 L607.75 302.10 L608.35 306.90 L608.95 304.50 L609.45 305.31 L609.83 306.68 L610.21 305.45 L610.59 305.22 L610.97 305.12 L611.35 305.32 L611.73 305.03 L612.11 305.78 L612.49 305.20 L612.87 305.13 L613.25 304.95 L613.63 305.02 L614.01 305.52 L614.39 306.58 L614.77 305.26 L615.15 305.34 L615.53 306.72 L615.91 305.21 L616.29 305.12 L616.67 305.53 L617.05 305.22 L617.43 306.58 L617.81 305.46 L618.19 303.95 L618.57 305.25 L618.95 305.21 L619.33 305.05 L619.71 305.33 L620.09 305.41 L620.47 304.87 L620.85 304.94 L621.23 306.31 L621.61 305.09 L621.99 305.25 L622.37 305.12 L622.75 305.81 L623.13 305.34 L623.51 304.41 L623.89 305.27 L624.27 305.39 L624.65 305.36 L625.03 306.37 L625.41 305.56 L625.79 304.10 L626.17 305.49 L626.55 303.83 L626.93 304.41 L627.31 305.16 L627.69 305.38 L628.07 304.99 L628.45 305.18 L628.83 305.16 L629.21 305.17 L629.59 305.24 L629.97 306.55 L630.35 305.25 L630.73 305.02 L631.11 304.49 L631.49 305.20 L631.87 305.40 L632.25 306.12 L632.63 305.21 L633.01 305.33 L633.39 304.30 L633.77 305.40 L634.15 305.38 L634.53 304.46 L634.91 305.33 L635.29 306.20 L635.67 305.20 L636.05 305.19 L636.43 306.69 L636.81 305.04 L637.19 305.52 L637.57 304.47 L637.95 304.04 L638.33 305.35 L638.71 305.29 L639.09 305.44 L639.47 305.03 L639.85 305.61 L640.23 305.28 L640.61 305.29 L640.99 305.48 L641.37 305.46 L641.75 305.19 L642.13 307.22 L642.50 305.09 M642.55 240.80 L643.20 252.00 L643.80 247.20 L644.40 249.60 L644.90 249.10 L645.28 248.86 L645.66 248.75 L646.04 248.90 L646.42 248.51 L646.80 249.01 L647.18 248.19 L647.56 248.77 L647.94 248.50 L648.32 248.66 L648.70 248.79 L649.08 248.98 L649.46 248.55 L649.84 249.50 L650.22 248.67 L650.60 248.76 L650.98 248.86 L651.36 248.90 L651.74 248.94 L652.12 248.97 L652.50 248.97 L652.88 248.51 L653.26 247.61 L653.64 248.79 L654.02 248.89 L654.40 250.54 L654.78 248.72 L655.16 247.47 L655.54 248.74 L655.92 248.92 L656.30 248.93 L656.68 248.90 L657.06 248.11 L657.44 248.72 L657.82 248.66 L658.20 248.78 L658.58 248.41 L658.96 249.03 L659.34 248.88 L659.72 248.60 L660.10 249.53 L660.48 249.21 L660.86 247.77 L661.24 248.58 L661.62 249.04 L662.00 249.12 L662.38 249.05 L662.76 248.75 L663.14 248.89 L663.52 248.65 L663.90 248.86 L664.28 248.75 L664.66 248.79 L665.04 249.19 L665.42 248.84 L665.80 248.74 L666.18 249.03 L666.56 249.07 L666.94 248.78 L667.32 248.83 L667.70 248.43 L668.08 249.00 L668.46 249.04 L668.84 248.58 L669.22 248.65 L669.60 248.73 L669.98 248.74 L670.36 247.71 L670.74 248.93 L671.12 248.89 L671.50 248.48 L671.88 248.38 L672.26 249.11 L672.64 250.09 L673.02 248.50 L673.40 248.53 L673.78 248.77 L674.16 248.64 L674.54 248.77 L674.92 249.04 L675.30 248.81 L675.68 248.86 L676.06 249.03 L676.44 248.57 L676.82 248.86 L677.20 248.45 L677.58 249.83 L677.95 248.74 M678.00 313.30 L678.65 302.10 L679.25 306.90 L679.85 304.50 L680.35 305.44 L680.73 305.15 L681.11 305.33 L681.49 305.13 L681.87 305.30 L682.25 306.74 L682.63 305.09 L683.01 305.13 L683.39 305.17 L683.77 305.13 L684.15 305.40 L684.53 306.39 L684.91 306.38 L685.29 305.23 L685.67 305.01 L686.05 305.46 L686.43 305.31 L686.81 305.23 L687.19 304.97 L687.57 305.29 L687.95 304.56 L688.33 305.26 L688.71 304.11 L689.09 305.35 L689.47 304.73 L689.85 304.08 L690.23 304.40 L690.61 306.68 L690.99 305.28 L691.37 305.31 L691.75 305.29 L692.13 305.30 L692.51 304.21 L692.89 305.17 L693.27 303.61 L693.65 305.52 L694.03 305.35 L694.41 304.11 L694.79 305.00 L695.17 305.19 L695.55 305.33 L695.93 305.38 L696.31 305.23 L696.69 305.29 L697.07 305.08 L697.45 305.39 L697.83 305.52 L698.21 305.69 L698.59 305.37 L698.97 305.24 L699.35 303.80 L699.73 306.63 L700.11 305.11 L700.49 305.50 L700.87 305.47 L701.25 305.13 L701.63 305.01 L702.01 305.75 L702.39 305.80 L702.77 305.33 L703.15 305.38 L703.53 305.22 L703.91 305.17 L704.29 304.31 L704.67 304.96 L705.05 305.22 L705.43 305.28 L705.81 305.35 L706.19 305.24 L706.57 305.61 L706.95 305.58 L707.33 305.33 L707.71 305.41 L708.09 305.17 L708.47 304.85 L708.85 305.79 L709.23 304.63 L709.61 305.22 L709.99 304.66 L710.37 305.32 L710.75 305.35 L711.13 305.40 L711.51 303.56 L711.89 305.49 L712.27 305.46 L712.65 305.23 L712.80 304.78" stroke="#1aa6b3" stroke-width="1.05" fill="none" stroke-linejoin="round"/><path d="M692.8 37.8 H710 V56.2 Z" fill="#4a4a4a"/><circle cx="706.6" cy="41.6" r="2.2" fill="none" stroke="#d8d8d8" stroke-width="0.8"/><path d="M705 43.2 L701.4 46.9" stroke="#d8d8d8" stroke-width="0.9"/><path d="M7 175.9 H17.7 L23.2 182.6 L17.7 189.4 H7 Q6 189.4 6 188.4 V176.9 Q6 175.9 7 175.9 Z" fill="#f3e52a"/><path d="M7 268.6 H17.8 L23.3 275.6 L17.8 282.6 H7 Q6.3 282.6 6.3 281.9 V269.3 Q6.3 268.6 7 268.6 Z" fill="#06282c" stroke="#158f9b" stroke-width="1.15"/><path d="M704.8 182.5 L709.6 177.8 V181.9 H713 V183.1 H709.6 V187.2 Z" fill="#f3e52a"/><ellipse cx="703.6" cy="182.6" rx="1.5" ry="2.3" fill="none" stroke="#d8cc20" stroke-width="0.8"/><path d="M240.7 27.5 H476.5" stroke="#bdbdbd" stroke-width="1" fill="none"/><path d="M244 23.5 H240.7 V31.2 H244 M473.4 23.5 H476.6 V31.2 H473.4" stroke="#cfcfcf" stroke-width="1" fill="none"/><path d="M355.6 21 H361.6 L358.6 23.4 Z" fill="#f0881c"/><path d="M355.9 25.9 H361.5 V29.6 Q361.5 31.9 358.7 31.9 Q355.9 31.9 355.9 29.6 Z" fill="#1c1208" stroke="#e8851c" stroke-width="0.8"/><path d="M357.5 27.3 H359.9 M358.7 27.3 V30.6" stroke="#f4b060" stroke-width="0.75"/><path d="M358.7 32 V34.4" stroke="#e8851c" stroke-width="0.9"/><path d="M354.5 34.1 H362.7 L358.6 38.5 Z" fill="#f0881c"/><path d="M354.7 39.6 H362.5 V47.9 H360.3 L358.6 51.3 L356.9 47.9 H354.7 Z" fill="#140a02" stroke="#f0881c" stroke-width="1.05" stroke-linejoin="round"/><path d="M356.8 42.1 H360.4 M358.6 42.1 V46.6" stroke="#f6a848" stroke-width="0.9"/><path d="M629.8 379.2 V388.6 L632 386.9 L633.6 390.5 L634.7 390 L633.2 386.5 L636 385.5 Z" fill="#141414" stroke="#b8b8b8" stroke-width="0.85" stroke-linejoin="round"/></svg>
<div class="b" style="left:720.30px;top:19.40px;width:75.70px;height:427.60px;background:#2d2d2d;border:1px solid #46423f;box-sizing:border-box;"></div>
<span class="t" style="left:738.00px;top:19.59px;font-size:8.6px;line-height:10.32px;color:#f4f4f4;font-weight:bold;transform:scaleX(0.949);-webkit-text-stroke:0.28px #f4f4f4;">Add New...</span>
<div class="b" style="left:724.40px;top:32.60px;width:32.60px;height:20.90px;background:linear-gradient(#343434,#2a2a2a 35%,#252525);border:1px solid #4d4945;border-radius:3px;box-sizing:border-box;box-shadow:0 0 0 0.6px #1c1c1c;"></div>
<div class="b" style="left:761.20px;top:32.60px;width:31.80px;height:20.90px;background:linear-gradient(#343434,#2a2a2a 35%,#252525);border:1px solid #4d4945;border-radius:3px;box-sizing:border-box;box-shadow:0 0 0 0.6px #1c1c1c;"></div>
<div class="b" style="left:724.40px;top:58.50px;width:32.60px;height:20.90px;background:linear-gradient(#343434,#2a2a2a 35%,#252525);border:1px solid #4d4945;border-radius:3px;box-sizing:border-box;box-shadow:0 0 0 0.6px #1c1c1c;"></div>
<div class="b" style="left:761.20px;top:58.50px;width:31.80px;height:20.90px;background:linear-gradient(#343434,#2a2a2a 35%,#252525);border:1px solid #4d4945;border-radius:3px;box-sizing:border-box;box-shadow:0 0 0 0.6px #1c1c1c;"></div>
<div class="b" style="left:724.40px;top:84.40px;width:32.60px;height:20.90px;background:linear-gradient(#343434,#2a2a2a 35%,#252525);border:1px solid #4d4945;border-radius:3px;box-sizing:border-box;box-shadow:0 0 0 0.6px #1c1c1c;"></div>
<div class="b" style="left:761.20px;top:84.40px;width:31.80px;height:20.90px;background:linear-gradient(#343434,#2a2a2a 35%,#252525);border:1px solid #4d4945;border-radius:3px;box-sizing:border-box;box-shadow:0 0 0 0.6px #1c1c1c;"></div>
<div class="b" style="left:724.40px;top:112.50px;width:32.60px;height:20.90px;background:linear-gradient(#343434,#2a2a2a 35%,#252525);border:1px solid #4d4945;border-radius:3px;box-sizing:border-box;box-shadow:0 0 0 0.6px #1c1c1c;"></div>
<div class="b" style="left:761.20px;top:112.50px;width:31.80px;height:20.90px;background:linear-gradient(#343434,#2a2a2a 35%,#252525);border:1px solid #4d4945;border-radius:3px;box-sizing:border-box;box-shadow:0 0 0 0.6px #1c1c1c;"></div>
<span class="t" style="left:727.80px;top:37.59px;font-size:8.6px;line-height:10.32px;color:#f0f0f0;transform:scaleX(0.854);-webkit-text-stroke:0.28px #f0f0f0;">Cursors</span>
<span class="t" style="left:764.40px;top:37.59px;font-size:8.6px;line-height:10.32px;color:#f0f0f0;transform:scaleX(0.919);-webkit-text-stroke:0.28px #f0f0f0;">Callout</span>
<span class="t" style="left:725.60px;top:63.79px;font-size:8.6px;line-height:10.32px;color:#f0f0f0;transform:scaleX(0.903);-webkit-text-stroke:0.28px #f0f0f0;">Measure</span>
<span class="t" style="left:766.00px;top:63.79px;font-size:8.6px;line-height:10.32px;color:#f0f0f0;transform:scaleX(0.822);-webkit-text-stroke:0.28px #f0f0f0;">Search</span>
<span class="t" style="left:728.60px;top:85.63px;font-size:8.2px;line-height:9.84px;color:#f0f0f0;transform:scaleX(0.878);-webkit-text-stroke:0.28px #f0f0f0;">Results</span>
<span class="t" style="left:731.60px;top:93.83px;font-size:8.2px;line-height:9.84px;color:#f0f0f0;transform:scaleX(0.939);-webkit-text-stroke:0.28px #f0f0f0;">Table</span>
<span class="t" style="left:769.60px;top:89.39px;font-size:8.6px;line-height:10.32px;color:#f0f0f0;transform:scaleX(0.972);-webkit-text-stroke:0.28px #f0f0f0;">Plot</span>
<span class="t" style="left:764.60px;top:117.59px;font-size:8.6px;line-height:10.32px;color:#f0f0f0;transform:scaleX(0.927);-webkit-text-stroke:0.28px #f0f0f0;">More...</span>
<div class="b" style="left:723.00px;top:108.20px;width:72.00px;height:0.80px;background:#46423e;"></div>
<div class="b" style="left:723.00px;top:137.20px;width:72.00px;height:0.80px;background:#46423e;"></div>
<svg class="b" style="left:0;top:0" width="800" height="500" viewBox="0 0 800 500"><rect x="734.65" y="116.75" width="1.2" height="1.2" fill="#b4b4b4"/><rect x="734.65" y="126.45" width="1.2" height="1.2" fill="#b4b4b4"/><rect x="734.65" y="116.75" width="1.2" height="1.2" fill="#b4b4b4"/><rect x="744.55" y="116.75" width="1.2" height="1.2" fill="#b4b4b4"/><rect x="737.95" y="116.75" width="1.2" height="1.2" fill="#b4b4b4"/><rect x="737.95" y="126.45" width="1.2" height="1.2" fill="#b4b4b4"/><rect x="734.65" y="119.98" width="1.2" height="1.2" fill="#b4b4b4"/><rect x="744.55" y="119.98" width="1.2" height="1.2" fill="#b4b4b4"/><rect x="741.25" y="116.75" width="1.2" height="1.2" fill="#b4b4b4"/><rect x="741.25" y="126.45" width="1.2" height="1.2" fill="#b4b4b4"/><rect x="734.65" y="123.22" width="1.2" height="1.2" fill="#b4b4b4"/><rect x="744.55" y="123.22" width="1.2" height="1.2" fill="#b4b4b4"/><rect x="744.55" y="116.75" width="1.2" height="1.2" fill="#b4b4b4"/><rect x="744.55" y="126.45" width="1.2" height="1.2" fill="#b4b4b4"/><rect x="734.65" y="126.45" width="1.2" height="1.2" fill="#b4b4b4"/><rect x="744.55" y="126.45" width="1.2" height="1.2" fill="#b4b4b4"/><circle cx="741" cy="120.9" r="2.1" fill="#1c1c1c" stroke="#e4e4e4" stroke-width="0.9"/><path d="M739.5 122.5 L737.1 124.7" stroke="#e4e4e4" stroke-width="1.1"/><path d="M743 124.6 L743 128.6 L744.1 127.7 L745 129.3 L745.8 128.9 L745 127.4 L746.4 127.2 Z" fill="#f0f0f0" stroke="#222" stroke-width="0.3"/></svg>
<div class="b" style="left:717.20px;top:228.70px;width:1.70px;height:1.70px;background:#e0e0e0;"></div>
<div class="b" style="left:717.20px;top:232.45px;width:1.70px;height:1.70px;background:#e0e0e0;"></div>
<div class="b" style="left:717.20px;top:236.20px;width:1.70px;height:1.70px;background:#e0e0e0;"></div>
<div class="b" style="left:3.00px;top:447.30px;width:793.00px;height:47.20px;background:#2d2d2d;"></div>
<div class="b" style="left:0.00px;top:498.80px;width:800.00px;height:1.20px;background:#e4e4e4;"></div>
<div class="b" style="left:3.90px;top:451.80px;width:46.00px;height:41.30px;background:#1c1c1c;border-radius:2.8px;"></div>
<div class="b" style="left:4.40px;top:452.30px;width:45.00px;height:40.30px;background:#cdcdcd;border-radius:2.2px;"></div>
<div class="b" style="left:4.40px;top:452.30px;width:45.00px;height:10.20px;background:#f3e731;border-radius:2.2px 2.2px 0 0;"></div>
<span class="t" style="left:7.00px;top:453.08px;font-size:8.8px;line-height:10.56px;color:#202000;transform:scaleX(0.796);-webkit-text-stroke:0.28px #202000;">Ch 1</span>
<span class="t" style="left:7.00px;top:463.53px;font-size:8.2px;line-height:9.84px;color:#1c1c1c;transform:scaleX(0.897);-webkit-text-stroke:0.28px #1c1c1c;">500 mV/div</span>
<span class="t" style="left:7.00px;top:473.83px;font-size:8.2px;line-height:9.84px;color:#1c1c1c;transform:scaleX(0.879);-webkit-text-stroke:0.28px #1c1c1c;">50 Ω</span>
<span class="t" style="left:7.40px;top:483.83px;font-size:8.2px;line-height:9.84px;color:#1c1c1c;transform:scaleX(0.839);-webkit-text-stroke:0.28px #1c1c1c;">1 GHz</span>
<div class="b" style="left:51.40px;top:451.80px;width:46.00px;height:41.30px;background:#1c1c1c;border-radius:2.8px;"></div>
<div class="b" style="left:51.90px;top:452.30px;width:45.00px;height:40.30px;background:#cdcdcd;border-radius:2.2px;"></div>
<div class="b" style="left:51.90px;top:452.30px;width:45.00px;height:10.20px;background:#1d4848;border-radius:2.2px 2.2px 0 0;"></div>
<span class="t" style="left:54.60px;top:453.08px;font-size:8.8px;line-height:10.56px;color:#2cc6d6;transform:scaleX(0.796);-webkit-text-stroke:0.28px #2cc6d6;">Ch 2</span>
<span class="t" style="left:54.60px;top:463.53px;font-size:8.2px;line-height:9.84px;color:#1c1c1c;transform:scaleX(0.897);-webkit-text-stroke:0.28px #1c1c1c;">500 mV/div</span>
<span class="t" style="left:54.60px;top:473.83px;font-size:8.2px;line-height:9.84px;color:#1c1c1c;transform:scaleX(0.879);-webkit-text-stroke:0.28px #1c1c1c;">50 Ω</span>
<span class="t" style="left:55.00px;top:483.83px;font-size:8.2px;line-height:9.84px;color:#1c1c1c;transform:scaleX(0.839);-webkit-text-stroke:0.28px #1c1c1c;">1 GHz</span>
<div class="b" style="left:346.90px;top:449.40px;width:20.00px;height:43.60px;background:linear-gradient(#2f2f2f,#272727);border:1px solid #4b4743;border-radius:3px;box-sizing:border-box;box-shadow:0 0 0 0.6px #1a1a1a;"></div>
<div class="b" style="left:349.00px;top:454.15px;width:15.80px;height:1.20px;background:#e23c58;border-radius:0.6px;"></div>
<div class="b" style="left:369.40px;top:449.40px;width:20.30px;height:43.60px;background:linear-gradient(#2f2f2f,#272727);border:1px solid #4b4743;border-radius:3px;box-sizing:border-box;box-shadow:0 0 0 0.6px #1a1a1a;"></div>
<div class="b" style="left:371.50px;top:454.15px;width:16.10px;height:1.20px;background:#8fd31f;border-radius:0.6px;"></div>
<span class="t" style="left:353.80px;top:466.80px;font-size:11px;line-height:13.20px;color:#f0f0f0;transform:scaleX(0.915);-webkit-text-stroke:0.05px #f0f0f0;">3</span>
<span class="t" style="left:376.20px;top:466.80px;font-size:11px;line-height:13.20px;color:#f0f0f0;transform:scaleX(0.981);-webkit-text-stroke:0.05px #f0f0f0;">4</span>
<div class="b" style="left:394.00px;top:450.00px;width:0.80px;height:43.00px;background:#444;"></div>
<div class="b" style="left:400.00px;top:449.40px;width:19.80px;height:43.60px;background:linear-gradient(#2f2f2f,#272727);border:1px solid #4b4743;border-radius:3px;box-sizing:border-box;box-shadow:0 0 0 0.6px #1a1a1a;"></div>
<div class="b" style="left:402.10px;top:454.15px;width:15.60px;height:1.20px;background:#ef8f28;border-radius:0.6px;"></div>
<div class="b" style="left:422.30px;top:449.40px;width:20.00px;height:43.60px;background:linear-gradient(#2f2f2f,#272727);border:1px solid #4b4743;border-radius:3px;box-sizing:border-box;box-shadow:0 0 0 0.6px #1a1a1a;"></div>
<div class="b" style="left:424.40px;top:454.15px;width:15.80px;height:1.20px;background:#c6cadc;border-radius:0.6px;"></div>
<div class="b" style="left:445.00px;top:449.40px;width:20.00px;height:43.60px;background:linear-gradient(#2f2f2f,#272727);border:1px solid #4b4743;border-radius:3px;box-sizing:border-box;box-shadow:0 0 0 0.6px #1a1a1a;"></div>
<div class="b" style="left:447.10px;top:454.15px;width:15.80px;height:1.20px;background:#c455e6;border-radius:0.6px;"></div>
<span class="t" style="left:403.40px;top:460.17px;font-size:8.3px;line-height:9.96px;color:#ededed;transform:scaleX(0.894);-webkit-text-stroke:0.1px #ededed;">Add</span>
<span class="t" style="left:402.80px;top:468.97px;font-size:8.3px;line-height:9.96px;color:#ededed;transform:scaleX(0.867);-webkit-text-stroke:0.1px #ededed;">New</span>
<span class="t" style="left:401.90px;top:477.77px;font-size:8.3px;line-height:9.96px;color:#ededed;transform:scaleX(0.878);-webkit-text-stroke:0.1px #ededed;">Math</span>
<span class="t" style="left:425.70px;top:460.17px;font-size:8.3px;line-height:9.96px;color:#ededed;transform:scaleX(0.894);-webkit-text-stroke:0.1px #ededed;">Add</span>
<span class="t" style="left:425.10px;top:468.97px;font-size:8.3px;line-height:9.96px;color:#ededed;transform:scaleX(0.867);-webkit-text-stroke:0.1px #ededed;">New</span>
<span class="t" style="left:426.90px;top:477.77px;font-size:8.3px;line-height:9.96px;color:#ededed;transform:scaleX(0.836);-webkit-text-stroke:0.1px #ededed;">Ref</span>
<span class="t" style="left:448.40px;top:460.17px;font-size:8.3px;line-height:9.96px;color:#ededed;transform:scaleX(0.894);-webkit-text-stroke:0.1px #ededed;">Add</span>
<span class="t" style="left:447.80px;top:468.97px;font-size:8.3px;line-height:9.96px;color:#ededed;transform:scaleX(0.867);-webkit-text-stroke:0.1px #ededed;">New</span>
<span class="t" style="left:449.20px;top:477.77px;font-size:8.3px;line-height:9.96px;color:#ededed;transform:scaleX(0.811);-webkit-text-stroke:0.1px #ededed;">Bus</span>
<div class="b" style="left:470.00px;top:450.00px;width:0.80px;height:43.00px;background:#444;"></div>
<div class="b" style="left:475.50px;top:451.80px;width:100.00px;height:41.30px;background:#1c1c1c;border-radius:2.8px;"></div>
<div class="b" style="left:476.00px;top:452.30px;width:99.00px;height:40.30px;background:#cdcdcd;border-radius:2.2px;"></div>
<div class="b" style="left:476.00px;top:452.30px;width:99.00px;height:10.20px;background:#5b5b5b;border-radius:2.2px 2.2px 0 0;"></div>
<span class="t" style="left:478.70px;top:453.08px;font-size:8.8px;line-height:10.56px;color:#f4f4f4;transform:scaleX(0.916);-webkit-text-stroke:0.28px #f4f4f4;">Horizontal</span>
<span class="t" style="left:478.00px;top:463.53px;font-size:8.2px;line-height:9.84px;color:#1c1c1c;transform:scaleX(0.869);-webkit-text-stroke:0.28px #1c1c1c;">200 ns/div</span>
<span class="t" style="left:531.20px;top:463.53px;font-size:8.2px;line-height:9.84px;color:#1c1c1c;transform:scaleX(0.830);-webkit-text-stroke:0.28px #1c1c1c;">2 µs</span>
<span class="t" style="left:478.00px;top:473.73px;font-size:8.2px;line-height:9.84px;color:#1c1c1c;transform:scaleX(0.820);-webkit-text-stroke:0.28px #1c1c1c;">SR: 6.25 GS/s</span>
<span class="t" style="left:531.20px;top:473.73px;font-size:8.2px;line-height:9.84px;color:#1c1c1c;transform:scaleX(0.889);-webkit-text-stroke:0.28px #1c1c1c;">160 ps/pt</span>
<span class="t" style="left:478.00px;top:483.63px;font-size:8.2px;line-height:9.84px;color:#1c1c1c;transform:scaleX(0.853);-webkit-text-stroke:0.28px #1c1c1c;">RL: 12.5 kpts</span>
<span class="t" style="left:538.20px;top:483.63px;font-size:8.2px;line-height:9.84px;color:#1c1c1c;transform:scaleX(0.871);-webkit-text-stroke:0.28px #1c1c1c;">50%</span>
<svg class="b" style="left:531px;top:484.6px" width="5" height="7" viewBox="0 0 5 7"><path d="M0.3 0.3 H4.7 V4.4 L2.5 6.7 L0.3 4.4 Z" fill="#e8851c"/><rect x="1.6" y="1.2" width="1.8" height="2.6" fill="#5a3a18"/></svg>
<div class="b" style="left:578.20px;top:451.80px;width:80.00px;height:41.30px;background:#1c1c1c;border-radius:2.8px;"></div>
<div class="b" style="left:578.70px;top:452.30px;width:79.00px;height:40.30px;background:#cdcdcd;border-radius:2.2px;"></div>
<div class="b" style="left:578.70px;top:452.30px;width:79.00px;height:10.20px;background:#5b5b5b;border-radius:2.2px 2.2px 0 0;"></div>
<span class="t" style="left:581.20px;top:453.08px;font-size:8.8px;line-height:10.56px;color:#f4f4f4;transform:scaleX(0.889);-webkit-text-stroke:0.28px #f4f4f4;">Trigger</span>
<div class="b" style="left:580.80px;top:464.00px;width:14.40px;height:8.00px;background:#f3ea2a;border:0.6px solid #55501a;border-radius:1.6px;box-sizing:border-box;"></div>
<span class="t" style="left:585.80px;top:463.11px;font-size:8.4px;line-height:10.08px;color:#111;font-weight:bold;transform:scaleX(0.942);-webkit-text-stroke:0px #111;">1</span>
<svg class="b" style="left:599px;top:464px" width="10" height="8" viewBox="0 0 10 8"><path d="M0.8 7 C3 7 3.4 6.4 4.4 4.4 C5.6 2 6 1.2 8.6 1.2" fill="none" stroke="#4a4a9a" stroke-width="0.9"/></svg>
<span class="t" style="left:612.00px;top:463.03px;font-size:8.2px;line-height:9.84px;color:#1c1c1c;transform:scaleX(0.878);-webkit-text-stroke:0.28px #1c1c1c;">0 V</span>
<div class="b" style="left:660.70px;top:451.80px;width:75.00px;height:41.30px;background:#1c1c1c;border-radius:2.8px;"></div>
<div class="b" style="left:661.20px;top:452.30px;width:74.00px;height:40.30px;background:#cdcdcd;border-radius:2.2px;"></div>
<div class="b" style="left:661.20px;top:452.30px;width:74.00px;height:10.20px;background:#5b5b5b;border-radius:2.2px 2.2px 0 0;"></div>
<span class="t" style="left:663.80px;top:453.08px;font-size:8.8px;line-height:10.56px;color:#f4f4f4;transform:scaleX(0.909);-webkit-text-stroke:0.28px #f4f4f4;">Acquisition</span>
<span class="t" style="left:663.50px;top:463.53px;font-size:8.2px;line-height:9.84px;color:#1c1c1c;transform:scaleX(0.898);-webkit-text-stroke:0.28px #1c1c1c;">Auto,</span>
<span class="t" style="left:702.50px;top:463.53px;font-size:8.2px;line-height:9.84px;color:#1c1c1c;transform:scaleX(0.847);-webkit-text-stroke:0.28px #1c1c1c;">Analyze</span>
<span class="t" style="left:663.50px;top:473.73px;font-size:8.2px;line-height:9.84px;color:#1c1c1c;transform:scaleX(0.851);-webkit-text-stroke:0.28px #1c1c1c;">Sample: 8 bits</span>
<span class="t" style="left:663.50px;top:483.73px;font-size:8.2px;line-height:9.84px;color:#1c1c1c;transform:scaleX(0.864);-webkit-text-stroke:0.28px #1c1c1c;">44 Acqs</span>
<div class="b" style="left:741.40px;top:450.00px;width:0.80px;height:43.00px;background:#444;"></div>
<div class="b" style="left:746.80px;top:451.50px;width:45.20px;height:20.30px;background:#f01d29;border-radius:2.5px;"></div>
<span class="t" style="left:755.00px;top:456.11px;font-size:8.4px;line-height:10.08px;color:#fff;font-weight:bold;transform:scaleX(0.863);-webkit-text-stroke:0.28px #fff;">Stopped</span>
<div class="b" style="left:746.80px;top:474.50px;width:45.20px;height:16.70px;background:#cfcfcf;border-radius:2.2px;box-shadow:0 0 0 0.6px #161616;"></div>
<span class="t" style="left:749.40px;top:474.54px;font-size:8px;line-height:9.60px;color:#222;transform:scaleX(0.908);-webkit-text-stroke:0.28px #222;">04 Jun 2024</span>
<span class="t" style="left:750.60px;top:483.74px;font-size:8px;line-height:9.60px;color:#222;transform:scaleX(0.929);-webkit-text-stroke:0.28px #222;">1:31:23 AM</span>
<span class="t" style="left:697.20px;top:55.20px;font-size:6.7px;line-height:8.04px;color:#e0d424;transform:scaleX(0.895);-webkit-text-stroke:0.17px #e0d424;">1.5 V</span>
<span class="t" style="left:702.80px;top:96.35px;font-size:6.7px;line-height:8.04px;color:#e0d424;transform:scaleX(0.835);-webkit-text-stroke:0.17px #e0d424;">1 V</span>
<span class="t" style="left:690.60px;top:137.50px;font-size:6.7px;line-height:8.04px;color:#e0d424;transform:scaleX(0.892);-webkit-text-stroke:0.17px #e0d424;">500 mV</span>
<span class="t" style="left:688.20px;top:219.80px;font-size:6.7px;line-height:8.04px;color:#e0d424;transform:scaleX(0.908);-webkit-text-stroke:0.17px #e0d424;">-500 mV</span>
<span class="t" style="left:700.40px;top:260.95px;font-size:6.7px;line-height:8.04px;color:#e0d424;transform:scaleX(0.879);-webkit-text-stroke:0.17px #e0d424;">-1 V</span>
<span class="t" style="left:694.80px;top:302.10px;font-size:6.7px;line-height:8.04px;color:#e0d424;transform:scaleX(0.918);-webkit-text-stroke:0.17px #e0d424;">-1.5 V</span>
<span class="t" style="left:700.40px;top:343.25px;font-size:6.7px;line-height:8.04px;color:#e0d424;transform:scaleX(0.879);-webkit-text-stroke:0.17px #e0d424;">-2 V</span>
<span class="t" style="left:694.80px;top:384.40px;font-size:6.7px;line-height:8.04px;color:#e0d424;transform:scaleX(0.918);-webkit-text-stroke:0.17px #e0d424;">-2.5 V</span>
<span class="t" style="left:700.40px;top:425.55px;font-size:6.7px;line-height:8.04px;color:#e0d424;transform:scaleX(0.879);-webkit-text-stroke:0.17px #e0d424;">-3 V</span>
<span class="t" style="left:65.69px;top:436.88px;font-size:6.4px;line-height:7.68px;color:#b0b0b0;transform:scaleX(0.900);-webkit-text-stroke:0.14px #b0b0b0;">-800 ns</span>
<span class="t" style="left:136.59px;top:436.88px;font-size:6.4px;line-height:7.68px;color:#b0b0b0;transform:scaleX(0.900);-webkit-text-stroke:0.14px #b0b0b0;">-600 ns</span>
<span class="t" style="left:207.49px;top:436.88px;font-size:6.4px;line-height:7.68px;color:#b0b0b0;transform:scaleX(0.900);-webkit-text-stroke:0.14px #b0b0b0;">-400 ns</span>
<span class="t" style="left:278.39px;top:436.88px;font-size:6.4px;line-height:7.68px;color:#b0b0b0;transform:scaleX(0.900);-webkit-text-stroke:0.14px #b0b0b0;">-200 ns</span>
<span class="t" style="left:355.06px;top:436.88px;font-size:6.4px;line-height:7.68px;color:#b0b0b0;transform:scaleX(0.900);-webkit-text-stroke:0.14px #b0b0b0;">0 s</span>
<span class="t" style="left:421.15px;top:436.88px;font-size:6.4px;line-height:7.68px;color:#b0b0b0;transform:scaleX(0.900);-webkit-text-stroke:0.14px #b0b0b0;">200 ns</span>
<span class="t" style="left:492.05px;top:436.88px;font-size:6.4px;line-height:7.68px;color:#b0b0b0;transform:scaleX(0.900);-webkit-text-stroke:0.14px #b0b0b0;">400 ns</span>
<span class="t" style="left:562.95px;top:436.88px;font-size:6.4px;line-height:7.68px;color:#b0b0b0;transform:scaleX(0.900);-webkit-text-stroke:0.14px #b0b0b0;">600 ns</span>
<span class="t" style="left:633.85px;top:436.88px;font-size:6.4px;line-height:7.68px;color:#b0b0b0;transform:scaleX(0.900);-webkit-text-stroke:0.14px #b0b0b0;">800 ns</span>
<span class="t" style="left:10.80px;top:178.89px;font-size:6.2px;line-height:7.44px;color:#2a2a00;transform:scaleX(0.746);-webkit-text-stroke:0.2px #2a2a00;">C 1</span>
<span class="t" style="left:10.80px;top:271.59px;font-size:6.2px;line-height:7.44px;color:#25b8c6;transform:scaleX(0.746);-webkit-text-stroke:0.12px #25b8c6;">C 2</span>
</body></html>
